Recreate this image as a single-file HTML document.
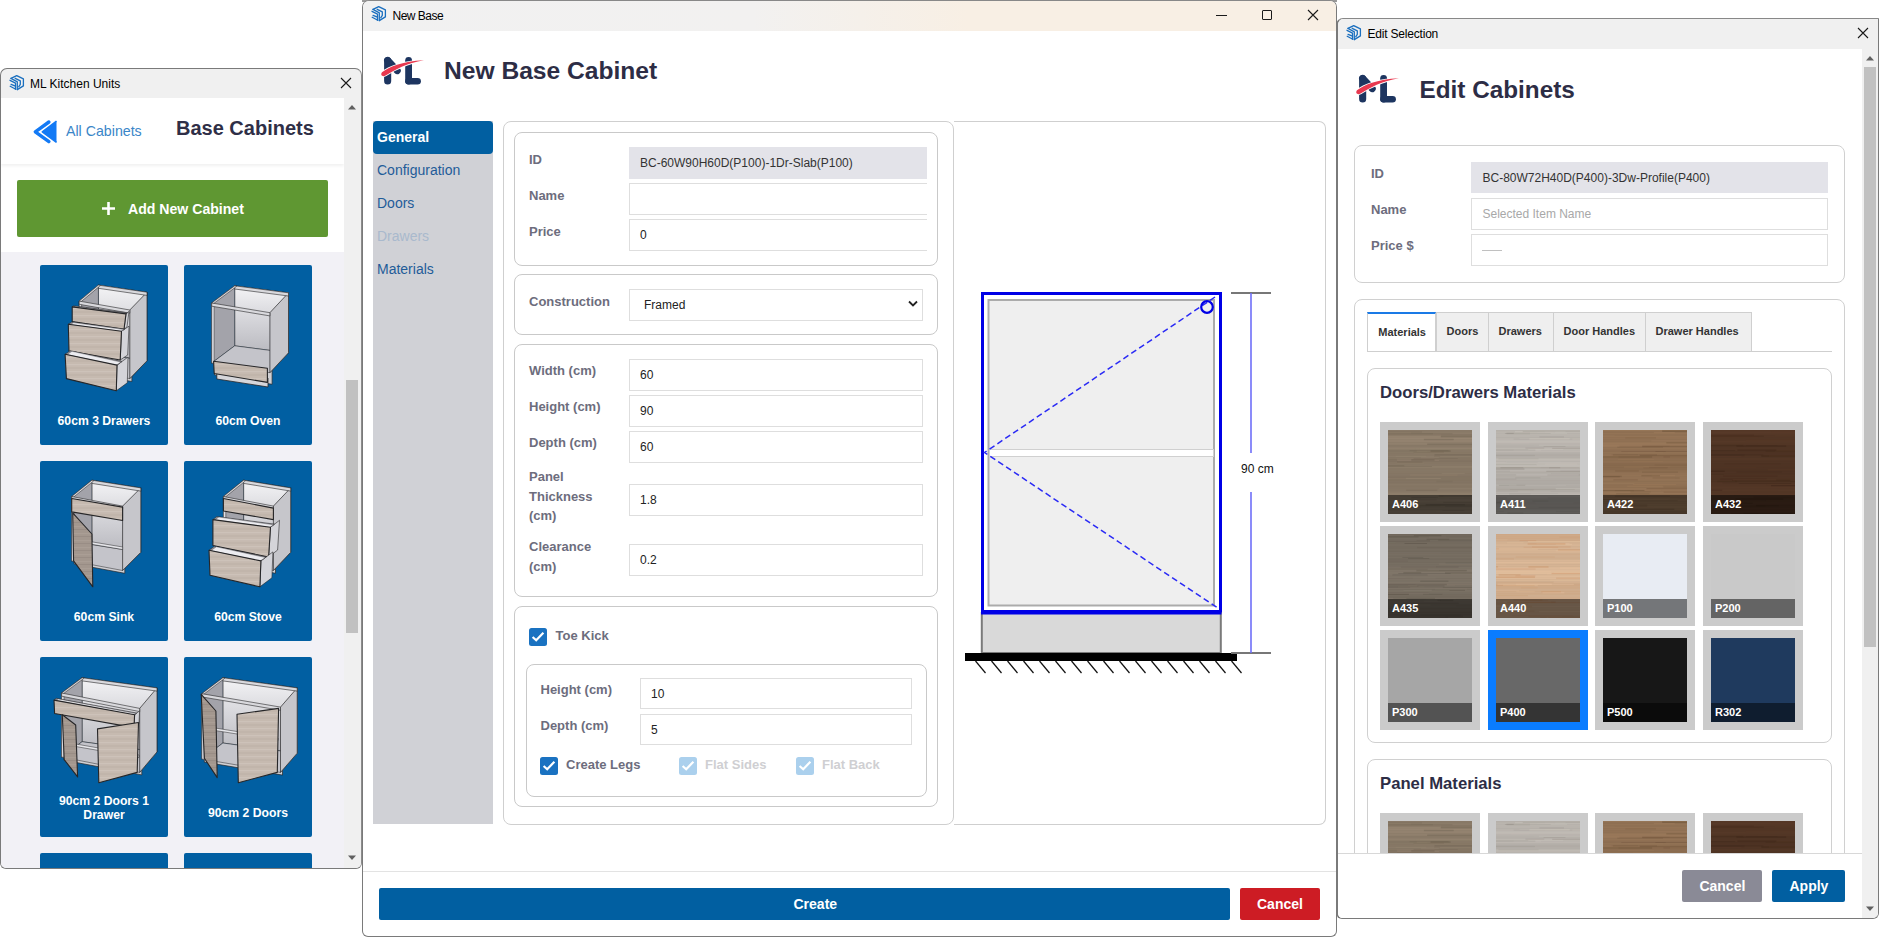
<!DOCTYPE html>
<html><head><meta charset="utf-8">
<style>
*{box-sizing:border-box;margin:0;padding:0}
html,body{width:1879px;height:937px;overflow:hidden;background:#fff;font-family:"Liberation Sans",sans-serif;position:relative}
</style></head><body>

<div style="position:absolute;left:362px;top:0px;width:975px;height:2px;background:#9a9a9a"></div>
<div style="position:absolute;left:0;top:68px;width:362px;height:801px;background:#f0f0f0;border:1px solid #7a7a7a;border-right-color:#8c8c8c;border-radius:7px 7px 6px 6px;overflow:hidden">
<svg style="position:absolute;left:7.699999999999999px;top:5.599999999999994px" width="16" height="16" viewBox="0 0 16 16">
<g fill="none" stroke="#1a6fbf" stroke-width="1.3" stroke-linejoin="round" stroke-linecap="round">
<path d="M2 3.4 L7.7 0.6 L14.4 3.9 L14.4 10.9 L8.3 14.6"/>
<path d="M2 3.4 L8.3 6.9 L8.3 14.6"/>
<path d="M6.2 3.3 L11.3 5.8 L11.3 9.3 L9.7 11.8"/>
<path d="M1 5.3 L6.5 8.1 L6.5 14.3"/>
<path d="M2.1 9.3 L5.8 10.9"/>
<path d="M1.2 11.2 L6.3 14"/>
</g></svg>
<div style="position:absolute;left:29px;top:8.84px;font-size:12px;line-height:12px;color:#000;font-weight:normal;white-space:nowrap;">ML Kitchen Units</div>
<svg style="position:absolute;left:339.0px;top:8.0px" width="12" height="12" viewBox="-6.0 -6.0 12 12"><path d="M-5.0 -5.0 L5.0 5.0 M5.0 -5.0 L-5.0 5.0" stroke="#1a1a1a" stroke-width="1.1"/></svg>
<div style="position:absolute;left:0px;top:29px;width:343px;height:770px;background:#f2f1f6"></div>
<div style="position:absolute;left:0px;top:29px;width:343px;height:154px;background:#fff"></div>
<div style="position:absolute;left:0px;top:29px;width:343px;height:66px;background:#fff;box-shadow:0 2px 3px rgba(0,0,0,0.06)"></div>
<svg style="position:absolute;left:27px;top:43px" width="36" height="36" viewBox="0 0 36 36">
<path d="M20.9 10 L7.3 19.8 L20.9 29.6" fill="none" stroke="#137af5" stroke-width="3.4" stroke-linecap="round" stroke-linejoin="round"/>
<path d="M28.5 9.2 L14.3 19.8 L28.5 30.4" fill="#137af5" stroke="#137af5" stroke-width="1.6" stroke-linejoin="round"/>
</svg>
<div style="position:absolute;left:65px;top:54.98px;font-size:14.2px;line-height:14.2px;color:#3a86c8;font-weight:normal;white-space:nowrap;">All Cabinets</div>
<div style="position:absolute;left:175px;top:48.57px;font-size:20px;line-height:20px;color:#2f2f47;font-weight:bold;white-space:nowrap;">Base Cabinets</div>
<div style="position:absolute;left:16px;top:111px;width:311px;height:57px;background:#5f9732;border-radius:2px"></div>
<svg style="position:absolute;left:100px;top:132px" width="15" height="15" viewBox="0 0 15 15"><path d="M7.5 1 V14 M1 7.5 H14" stroke="#fff" stroke-width="2.6"/></svg>
<div style="position:absolute;left:127px;top:132.56px;font-size:14.1px;line-height:14.1px;color:#fff;font-weight:bold;white-space:nowrap;">Add New Cabinet</div>
<div style="position:absolute;left:343px;top:29px;width:17px;height:770px;background:#f0f0f0"></div>
<div style="position:absolute;left:345px;top:311px;width:12px;height:253px;background:#c1c1c1"></div>
<svg style="position:absolute;left:346px;top:35px" width="10" height="6" viewBox="0 0 10 6"><path d="M1 5.5 L5 1 L9 5.5 Z" fill="#606060"/></svg>
<svg style="position:absolute;left:346px;top:786px" width="10" height="6" viewBox="0 0 10 6"><path d="M1 0.5 L5 5 L9 0.5 Z" fill="#606060"/></svg>
<div style="position:absolute;left:39px;top:196px;width:128px;height:180px;background:#015fa2;border-radius:2px"></div>
<svg style="position:absolute;left:39px;top:196px" width="128" height="180" viewBox="0 0 128 180"><defs>
<linearGradient id="gback" x1="0" y1="0" x2="0" y2="1"><stop offset="0" stop-color="#f4f4f6"/><stop offset="0.35" stop-color="#dedee2"/><stop offset="1" stop-color="#b9b9bf"/></linearGradient>
<pattern id="gwood" width="128" height="7" patternUnits="userSpaceOnUse"><rect width="128" height="7" fill="#c6bab0"/><rect y="1" width="128" height="1.2" fill="#cdc2b9"/><rect y="4.5" width="128" height="1" fill="#bdb0a6"/></pattern>
<pattern id="gwoodd" width="128" height="7" patternUnits="userSpaceOnUse"><rect width="128" height="7" fill="#a3978e"/><rect y="2" width="128" height="1.2" fill="#aa9e95"/><rect y="5" width="128" height="1" fill="#998d85"/></pattern>
</defs><polygon points="41.5,102.8 91.9,111.5 91.9,116.5 41.5,107.8" fill="#d0d0d4" stroke="#262628" stroke-width="0.7" stroke-linejoin="round" /><polygon points="58.4,20.1 107.0,27.2 107.0,95.8 58.4,88.7" fill="url(#gback)" stroke="#262628" stroke-width="0.5" stroke-linejoin="round" /><polygon points="39.2,36.1 58.4,20.1 58.4,88.7 39.2,104.7" fill="#a3a3aa" stroke="#262628" stroke-width="0.5" stroke-linejoin="round" /><polygon points="39.2,104.7 89.8,113.6 107.0,95.8 58.4,88.7" fill="#c4c4ca" stroke="#262628" stroke-width="0.5" stroke-linejoin="round" /><polygon points="89.8,45.0 107.0,27.2 107.0,95.8 89.8,113.6" fill="#c6c6cb" stroke="#262628" stroke-width="0.7" stroke-linejoin="round" /><polygon points="39.2,36.1 41.6,36.5 41.6,105.1 39.2,104.7" fill="#e2e2e6" stroke="#262628" stroke-width="0.5" stroke-linejoin="round" /><polygon points="58.4,20.1 107.0,27.2 107.0,30.4 58.4,23.3" fill="#d9d9dd" stroke="#262628" stroke-width="0.6" stroke-linejoin="round" /><polygon points="39.2,36.1 58.4,20.1 60.4,20.6 41.2,36.6" fill="#d9d9dd" stroke="#262628" stroke-width="0.5" stroke-linejoin="round" /><polygon points="39.2,36.1 89.8,45.0 89.8,48.2 39.2,39.3" fill="#d9d9dd" stroke="#262628" stroke-width="0.6" stroke-linejoin="round" /><polygon points="86.0,48.9 89.0,46.4 87.0,61.8 84.0,64.3" fill="#d4d4d9" stroke="#262628" stroke-width="0.6" stroke-linejoin="round" /><polygon points="32.2,41.9 86.0,48.9 87.3,47.8 33.6,40.8" fill="#8e8e96" stroke="#262628" stroke-width="0.5" stroke-linejoin="round" /><polygon points="34.2,42.2 85.0,49.1 86.3,48.4 35.6,41.4" fill="#ececf0" stroke="#262628" stroke-width="0.3" stroke-linejoin="round" /><polygon points="32.2,41.9 86.0,48.9 84.0,64.3 32.2,56.6" fill="url(#gwood)" stroke="#262628" stroke-width="1.1" stroke-linejoin="round" /><polygon points="81.5,66.2 89.0,61.2 87.7,90.0 80.2,95.0" fill="#d4d4d9" stroke="#262628" stroke-width="0.6" stroke-linejoin="round" /><polygon points="28.3,59.2 81.5,66.2 84.9,64.0 31.7,57.0" fill="#8e8e96" stroke="#262628" stroke-width="0.5" stroke-linejoin="round" /><polygon points="30.3,59.5 80.5,66.4 83.9,64.5 33.7,57.6" fill="#ececf0" stroke="#262628" stroke-width="0.3" stroke-linejoin="round" /><polygon points="28.3,59.2 81.5,66.2 80.2,95.0 29.0,86.0" fill="url(#gwood)" stroke="#262628" stroke-width="1.1" stroke-linejoin="round" /><polygon points="77.0,100.1 88.0,92.1 87.3,117.8 76.3,125.8" fill="#d4d4d9" stroke="#262628" stroke-width="0.6" stroke-linejoin="round" /><polygon points="25.1,89.3 77.0,100.1 82.0,96.5 30.1,85.7" fill="#8e8e96" stroke="#262628" stroke-width="0.5" stroke-linejoin="round" /><polygon points="27.1,89.6 76.0,100.3 81.0,97.1 32.0,86.3" fill="#ececf0" stroke="#262628" stroke-width="0.3" stroke-linejoin="round" /><polygon points="25.1,89.3 77.0,100.1 76.3,125.8 26.4,113.6" fill="url(#gwood)" stroke="#262628" stroke-width="1.1" stroke-linejoin="round" /></svg>
<div style="position:absolute;left:39px;top:344.5px;width:128px;text-align:center;font-size:12.2px;line-height:14.5px;color:#fff;font-weight:bold">60cm 3 Drawers</div>
<div style="position:absolute;left:183px;top:196px;width:128px;height:180px;background:#015fa2;border-radius:2px"></div>
<svg style="position:absolute;left:183px;top:196px" width="128" height="180" viewBox="0 0 128 180"><defs>
<linearGradient id="gback" x1="0" y1="0" x2="0" y2="1"><stop offset="0" stop-color="#f4f4f6"/><stop offset="0.35" stop-color="#dedee2"/><stop offset="1" stop-color="#b9b9bf"/></linearGradient>
<pattern id="gwood" width="128" height="7" patternUnits="userSpaceOnUse"><rect width="128" height="7" fill="#c6bab0"/><rect y="1" width="128" height="1.2" fill="#cdc2b9"/><rect y="4.5" width="128" height="1" fill="#bdb0a6"/></pattern>
<pattern id="gwoodd" width="128" height="7" patternUnits="userSpaceOnUse"><rect width="128" height="7" fill="#a3978e"/><rect y="2" width="128" height="1.2" fill="#aa9e95"/><rect y="5" width="128" height="1" fill="#998d85"/></pattern>
</defs><polygon points="30.5,95.9 88.1,105.3 88.1,119.3 30.5,109.9" fill="#d0d0d4" stroke="#262628" stroke-width="0.7" stroke-linejoin="round" /><polygon points="50.7,20.8 104.5,27.8 104.5,87.8 50.7,80.8" fill="url(#gback)" stroke="#262628" stroke-width="0.5" stroke-linejoin="round" /><polygon points="27.7,38.0 50.7,20.8 50.7,80.8 27.7,98.0" fill="#a3a3aa" stroke="#262628" stroke-width="0.5" stroke-linejoin="round" /><polygon points="27.7,98.0 85.9,107.7 104.5,87.8 50.7,80.8" fill="#c4c4ca" stroke="#262628" stroke-width="0.5" stroke-linejoin="round" /><polygon points="85.9,47.7 104.5,27.8 104.5,87.8 85.9,107.7" fill="#c6c6cb" stroke="#262628" stroke-width="0.7" stroke-linejoin="round" /><polygon points="27.7,38.0 30.1,38.4 30.1,98.4 27.7,98.0" fill="#e2e2e6" stroke="#262628" stroke-width="0.5" stroke-linejoin="round" /><polygon points="50.7,20.8 104.5,27.8 104.5,31.0 50.7,24.0" fill="#d9d9dd" stroke="#262628" stroke-width="0.6" stroke-linejoin="round" /><polygon points="27.7,38.0 50.7,20.8 52.7,21.3 29.7,38.5" fill="#d9d9dd" stroke="#262628" stroke-width="0.5" stroke-linejoin="round" /><polygon points="27.7,38.0 85.9,47.7 85.9,50.9 27.7,41.2" fill="#d9d9dd" stroke="#262628" stroke-width="0.6" stroke-linejoin="round" /><polygon points="32.8,106.0 84.0,113.0 84.0,122.0 32.8,114.0" fill="#d6d6da" stroke="#262628" stroke-width="0.8" stroke-linejoin="round" /><polygon points="29.6,96.3 83.4,103.3 83.4,117.4 30.2,108.5" fill="url(#gwood)" stroke="#262628" stroke-width="1.1" stroke-linejoin="round" /></svg>
<div style="position:absolute;left:183px;top:344.5px;width:128px;text-align:center;font-size:12.2px;line-height:14.5px;color:#fff;font-weight:bold">60cm Oven</div>
<div style="position:absolute;left:39px;top:392px;width:128px;height:180px;background:#015fa2;border-radius:2px"></div>
<svg style="position:absolute;left:39px;top:392px" width="128" height="180" viewBox="0 0 128 180"><defs>
<linearGradient id="gback" x1="0" y1="0" x2="0" y2="1"><stop offset="0" stop-color="#f4f4f6"/><stop offset="0.35" stop-color="#dedee2"/><stop offset="1" stop-color="#b9b9bf"/></linearGradient>
<pattern id="gwood" width="128" height="7" patternUnits="userSpaceOnUse"><rect width="128" height="7" fill="#c6bab0"/><rect y="1" width="128" height="1.2" fill="#cdc2b9"/><rect y="4.5" width="128" height="1" fill="#bdb0a6"/></pattern>
<pattern id="gwoodd" width="128" height="7" patternUnits="userSpaceOnUse"><rect width="128" height="7" fill="#a3978e"/><rect y="2" width="128" height="1.2" fill="#aa9e95"/><rect y="5" width="128" height="1" fill="#998d85"/></pattern>
</defs><polygon points="34.1,97.9 84.8,107.3 84.8,112.3 34.1,102.9" fill="#d0d0d4" stroke="#262628" stroke-width="0.7" stroke-linejoin="round" /><polygon points="51.9,19.2 100.8,26.9 100.8,91.3 51.9,83.6" fill="url(#gback)" stroke="#262628" stroke-width="0.5" stroke-linejoin="round" /><polygon points="31.7,35.5 51.9,19.2 51.9,83.6 31.7,99.9" fill="#a3a3aa" stroke="#262628" stroke-width="0.5" stroke-linejoin="round" /><polygon points="31.7,99.9 82.6,109.5 100.8,91.3 51.9,83.6" fill="#c4c4ca" stroke="#262628" stroke-width="0.5" stroke-linejoin="round" /><polygon points="82.6,45.1 100.8,26.9 100.8,91.3 82.6,109.5" fill="#c6c6cb" stroke="#262628" stroke-width="0.7" stroke-linejoin="round" /><polygon points="31.7,35.5 34.1,35.9 34.1,100.3 31.7,99.9" fill="#e2e2e6" stroke="#262628" stroke-width="0.5" stroke-linejoin="round" /><polygon points="51.9,19.2 100.8,26.9 100.8,30.1 51.9,22.4" fill="#d9d9dd" stroke="#262628" stroke-width="0.6" stroke-linejoin="round" /><polygon points="31.7,35.5 51.9,19.2 53.9,19.7 33.7,36.0" fill="#d9d9dd" stroke="#262628" stroke-width="0.5" stroke-linejoin="round" /><polygon points="31.7,35.5 82.6,45.1 82.6,48.3 31.7,38.7" fill="#d9d9dd" stroke="#262628" stroke-width="0.6" stroke-linejoin="round" /><polygon points="38.0,78.5 82.6,86.0 82.6,88.5 38.0,81.0" fill="#e6e6ea" stroke="#262628" stroke-width="0.5" stroke-linejoin="round" /><polygon points="31.7,37.5 82.6,46.1 82.6,59.5 31.7,50.9" fill="url(#gwood)" stroke="#262628" stroke-width="1.1" stroke-linejoin="round" /><polygon points="32.7,51.9 51.9,73.0 52.8,125.8 33.6,99.9" fill="url(#gwoodd)" stroke="#262628" stroke-width="1.1" stroke-linejoin="round" /></svg>
<div style="position:absolute;left:39px;top:540.5px;width:128px;text-align:center;font-size:12.2px;line-height:14.5px;color:#fff;font-weight:bold">60cm Sink</div>
<div style="position:absolute;left:183px;top:392px;width:128px;height:180px;background:#015fa2;border-radius:2px"></div>
<svg style="position:absolute;left:183px;top:392px" width="128" height="180" viewBox="0 0 128 180"><defs>
<linearGradient id="gback" x1="0" y1="0" x2="0" y2="1"><stop offset="0" stop-color="#f4f4f6"/><stop offset="0.35" stop-color="#dedee2"/><stop offset="1" stop-color="#b9b9bf"/></linearGradient>
<pattern id="gwood" width="128" height="7" patternUnits="userSpaceOnUse"><rect width="128" height="7" fill="#c6bab0"/><rect y="1" width="128" height="1.2" fill="#cdc2b9"/><rect y="4.5" width="128" height="1" fill="#bdb0a6"/></pattern>
<pattern id="gwoodd" width="128" height="7" patternUnits="userSpaceOnUse"><rect width="128" height="7" fill="#a3978e"/><rect y="2" width="128" height="1.2" fill="#aa9e95"/><rect y="5" width="128" height="1" fill="#998d85"/></pattern>
</defs><polygon points="41.8,97.9 91.5,107.3 91.5,112.3 41.8,102.9" fill="#d0d0d4" stroke="#262628" stroke-width="0.7" stroke-linejoin="round" /><polygon points="59.6,19.2 106.7,26.9 106.7,91.3 59.6,83.6" fill="url(#gback)" stroke="#262628" stroke-width="0.5" stroke-linejoin="round" /><polygon points="39.4,35.5 59.6,19.2 59.6,83.6 39.4,99.9" fill="#a3a3aa" stroke="#262628" stroke-width="0.5" stroke-linejoin="round" /><polygon points="39.4,99.9 89.4,109.5 106.7,91.3 59.6,83.6" fill="#c4c4ca" stroke="#262628" stroke-width="0.5" stroke-linejoin="round" /><polygon points="89.4,45.1 106.7,26.9 106.7,91.3 89.4,109.5" fill="#c6c6cb" stroke="#262628" stroke-width="0.7" stroke-linejoin="round" /><polygon points="39.4,35.5 41.8,35.9 41.8,100.3 39.4,99.9" fill="#e2e2e6" stroke="#262628" stroke-width="0.5" stroke-linejoin="round" /><polygon points="59.6,19.2 106.7,26.9 106.7,30.1 59.6,22.4" fill="#d9d9dd" stroke="#262628" stroke-width="0.6" stroke-linejoin="round" /><polygon points="39.4,35.5 59.6,19.2 61.6,19.7 41.4,36.0" fill="#d9d9dd" stroke="#262628" stroke-width="0.5" stroke-linejoin="round" /><polygon points="39.4,35.5 89.4,45.1 89.4,48.3 39.4,38.7" fill="#d9d9dd" stroke="#262628" stroke-width="0.6" stroke-linejoin="round" /><polygon points="39.4,37.5 89.4,47.1 89.4,58.6 39.4,50.0" fill="url(#gwood)" stroke="#262628" stroke-width="1.1" stroke-linejoin="round" /><polygon points="86.5,66.3 95.5,59.3 93.6,89.0 84.6,96.0" fill="#d4d4d9" stroke="#262628" stroke-width="0.6" stroke-linejoin="round" /><polygon points="28.9,58.6 86.5,66.3 90.5,63.1 32.9,55.5" fill="#8e8e96" stroke="#262628" stroke-width="0.5" stroke-linejoin="round" /><polygon points="30.9,58.9 85.5,66.5 89.5,63.8 34.9,56.1" fill="#ececf0" stroke="#262628" stroke-width="0.3" stroke-linejoin="round" /><polygon points="28.9,58.6 86.5,66.3 84.6,96.0 28.9,84.5" fill="url(#gwood)" stroke="#262628" stroke-width="1.1" stroke-linejoin="round" /><polygon points="76.9,99.9 88.9,90.9 87.9,116.8 75.9,125.8" fill="#d4d4d9" stroke="#262628" stroke-width="0.6" stroke-linejoin="round" /><polygon points="25.0,89.3 76.9,99.9 82.3,95.9 30.4,85.2" fill="#8e8e96" stroke="#262628" stroke-width="0.5" stroke-linejoin="round" /><polygon points="27.0,89.6 75.9,100.1 81.3,96.5 32.4,85.8" fill="#ececf0" stroke="#262628" stroke-width="0.3" stroke-linejoin="round" /><polygon points="25.0,89.3 76.9,99.9 75.9,125.8 26.0,114.3" fill="url(#gwood)" stroke="#262628" stroke-width="1.1" stroke-linejoin="round" /></svg>
<div style="position:absolute;left:183px;top:540.5px;width:128px;text-align:center;font-size:12.2px;line-height:14.5px;color:#fff;font-weight:bold">60cm Stove</div>
<div style="position:absolute;left:39px;top:588px;width:128px;height:180px;background:#015fa2;border-radius:2px"></div>
<svg style="position:absolute;left:39px;top:588px" width="128" height="180" viewBox="0 0 128 180"><defs>
<linearGradient id="gback" x1="0" y1="0" x2="0" y2="1"><stop offset="0" stop-color="#f4f4f6"/><stop offset="0.35" stop-color="#dedee2"/><stop offset="1" stop-color="#b9b9bf"/></linearGradient>
<pattern id="gwood" width="128" height="7" patternUnits="userSpaceOnUse"><rect width="128" height="7" fill="#c6bab0"/><rect y="1" width="128" height="1.2" fill="#cdc2b9"/><rect y="4.5" width="128" height="1" fill="#bdb0a6"/></pattern>
<pattern id="gwoodd" width="128" height="7" patternUnits="userSpaceOnUse"><rect width="128" height="7" fill="#a3978e"/><rect y="2" width="128" height="1.2" fill="#aa9e95"/><rect y="5" width="128" height="1" fill="#998d85"/></pattern>
</defs><polygon points="24.1,98.2 101.8,112.9 101.8,117.9 24.1,103.2" fill="#d0d0d4" stroke="#262628" stroke-width="0.7" stroke-linejoin="round" /><polygon points="42.1,20.7 117.0,30.9 117.0,94.9 42.1,84.7" fill="url(#gback)" stroke="#262628" stroke-width="0.5" stroke-linejoin="round" /><polygon points="21.6,36.0 42.1,20.7 42.1,84.7 21.6,100.0" fill="#a3a3aa" stroke="#262628" stroke-width="0.5" stroke-linejoin="round" /><polygon points="21.6,100.0 99.7,115.4 117.0,94.9 42.1,84.7" fill="#c4c4ca" stroke="#262628" stroke-width="0.5" stroke-linejoin="round" /><polygon points="99.7,51.4 117.0,30.9 117.0,94.9 99.7,115.4" fill="#c6c6cb" stroke="#262628" stroke-width="0.7" stroke-linejoin="round" /><polygon points="21.6,36.0 24.0,36.4 24.0,100.4 21.6,100.0" fill="#e2e2e6" stroke="#262628" stroke-width="0.5" stroke-linejoin="round" /><polygon points="42.1,20.7 117.0,30.9 117.0,34.1 42.1,23.9" fill="#d9d9dd" stroke="#262628" stroke-width="0.6" stroke-linejoin="round" /><polygon points="21.6,36.0 42.1,20.7 44.1,21.2 23.6,36.5" fill="#d9d9dd" stroke="#262628" stroke-width="0.5" stroke-linejoin="round" /><polygon points="21.6,36.0 99.7,51.4 99.7,54.6 21.6,39.2" fill="#d9d9dd" stroke="#262628" stroke-width="0.6" stroke-linejoin="round" /><polygon points="30.0,86.0 99.0,98.0 99.0,100.5 30.0,88.5" fill="#e6e6ea" stroke="#262628" stroke-width="0.5" stroke-linejoin="round" /><polygon points="94.6,57.8 99.6,53.8 99.0,66.6 94.0,70.6" fill="#d4d4d9" stroke="#262628" stroke-width="0.6" stroke-linejoin="round" /><polygon points="14.0,43.1 94.6,57.8 96.8,56.0 16.2,41.3" fill="#8e8e96" stroke="#262628" stroke-width="0.5" stroke-linejoin="round" /><polygon points="16.0,43.4 93.6,58.0 95.8,56.6 18.2,41.9" fill="#ececf0" stroke="#262628" stroke-width="0.3" stroke-linejoin="round" /><polygon points="14.0,43.1 94.6,57.8 94.0,70.6 14.6,56.5" fill="url(#gwood)" stroke="#262628" stroke-width="1.1" stroke-linejoin="round" /><polygon points="22.3,57.8 35.7,68.0 37.6,119.9 24.2,102.6" fill="url(#gwoodd)" stroke="#262628" stroke-width="1.1" stroke-linejoin="round" /><polygon points="57.5,71.9 98.5,65.5 97.2,115.4 58.8,125.7" fill="url(#gwood)" stroke="#262628" stroke-width="1.1" stroke-linejoin="round" /></svg>
<div style="position:absolute;left:39px;top:724.5px;width:128px;text-align:center;font-size:12.2px;line-height:14.5px;color:#fff;font-weight:bold">90cm 2 Doors 1<br>Drawer</div>
<div style="position:absolute;left:183px;top:588px;width:128px;height:180px;background:#015fa2;border-radius:2px"></div>
<svg style="position:absolute;left:183px;top:588px" width="128" height="180" viewBox="0 0 128 180"><defs>
<linearGradient id="gback" x1="0" y1="0" x2="0" y2="1"><stop offset="0" stop-color="#f4f4f6"/><stop offset="0.35" stop-color="#dedee2"/><stop offset="1" stop-color="#b9b9bf"/></linearGradient>
<pattern id="gwood" width="128" height="7" patternUnits="userSpaceOnUse"><rect width="128" height="7" fill="#c6bab0"/><rect y="1" width="128" height="1.2" fill="#cdc2b9"/><rect y="4.5" width="128" height="1" fill="#bdb0a6"/></pattern>
<pattern id="gwoodd" width="128" height="7" patternUnits="userSpaceOnUse"><rect width="128" height="7" fill="#a3978e"/><rect y="2" width="128" height="1.2" fill="#aa9e95"/><rect y="5" width="128" height="1" fill="#998d85"/></pattern>
</defs><polygon points="20.3,100.1 98.5,113.1 98.5,118.1 20.3,105.1" fill="#d0d0d4" stroke="#262628" stroke-width="0.7" stroke-linejoin="round" /><polygon points="38.9,20.7 113.2,30.9 113.2,96.2 38.9,86.0" fill="url(#gback)" stroke="#262628" stroke-width="0.5" stroke-linejoin="round" /><polygon points="17.8,36.7 38.9,20.7 38.9,86.0 17.8,102.0" fill="#a3a3aa" stroke="#262628" stroke-width="0.5" stroke-linejoin="round" /><polygon points="17.8,102.0 96.5,115.4 113.2,96.2 38.9,86.0" fill="#c4c4ca" stroke="#262628" stroke-width="0.5" stroke-linejoin="round" /><polygon points="96.5,50.1 113.2,30.9 113.2,96.2 96.5,115.4" fill="#c6c6cb" stroke="#262628" stroke-width="0.7" stroke-linejoin="round" /><polygon points="17.8,36.7 20.2,37.1 20.2,102.4 17.8,102.0" fill="#e2e2e6" stroke="#262628" stroke-width="0.5" stroke-linejoin="round" /><polygon points="38.9,20.7 113.2,30.9 113.2,34.1 38.9,23.9" fill="#d9d9dd" stroke="#262628" stroke-width="0.6" stroke-linejoin="round" /><polygon points="17.8,36.7 38.9,20.7 40.9,21.2 19.8,37.2" fill="#d9d9dd" stroke="#262628" stroke-width="0.5" stroke-linejoin="round" /><polygon points="17.8,36.7 96.5,50.1 96.5,53.3 17.8,39.9" fill="#d9d9dd" stroke="#262628" stroke-width="0.6" stroke-linejoin="round" /><polygon points="31.0,71.0 94.0,81.0 94.0,83.5 31.0,73.5" fill="#e6e6ea" stroke="#262628" stroke-width="0.5" stroke-linejoin="round" /><polygon points="17.2,37.3 31.9,54.0 33.2,120.6 20.4,101.3" fill="url(#gwoodd)" stroke="#262628" stroke-width="1.1" stroke-linejoin="round" /><polygon points="53.0,57.2 94.6,51.4 93.3,115.4 54.3,125.7" fill="url(#gwood)" stroke="#262628" stroke-width="1.1" stroke-linejoin="round" /></svg>
<div style="position:absolute;left:183px;top:736.5px;width:128px;text-align:center;font-size:12.2px;line-height:14.5px;color:#fff;font-weight:bold">90cm 2 Doors</div>
<div style="position:absolute;left:39px;top:784px;width:128px;height:180px;background:#015fa2;border-radius:2px"></div>
<div style="position:absolute;left:183px;top:784px;width:128px;height:180px;background:#015fa2;border-radius:2px"></div>
</div>
<div style="position:absolute;left:362px;top:0;width:975px;height:937px;background:#fff;border:1px solid #7a7a7a;border-top-color:#888;border-radius:7px 7px 6px 6px;overflow:hidden">
<div style="position:absolute;left:0px;top:0px;width:975px;height:30px;background:linear-gradient(90deg,#f1f1f1 0%,#f2f1f0 40%,#f8efe4 62%,#f8efe4 100%)"></div>
<svg style="position:absolute;left:8px;top:5px" width="16" height="16" viewBox="0 0 16 16">
<g fill="none" stroke="#1a6fbf" stroke-width="1.3" stroke-linejoin="round" stroke-linecap="round">
<path d="M2 3.4 L7.7 0.6 L14.4 3.9 L14.4 10.9 L8.3 14.6"/>
<path d="M2 3.4 L8.3 6.9 L8.3 14.6"/>
<path d="M6.2 3.3 L11.3 5.8 L11.3 9.3 L9.7 11.8"/>
<path d="M1 5.3 L6.5 8.1 L6.5 14.3"/>
<path d="M2.1 9.3 L5.8 10.9"/>
<path d="M1.2 11.2 L6.3 14"/>
</g></svg>
<div style="position:absolute;left:29.5px;top:8.84px;font-size:12px;line-height:12px;color:#000;font-weight:normal;white-space:nowrap;letter-spacing:-0.5px">New Base</div>
<div style="position:absolute;left:853px;top:14px;width:11px;height:1.2px;background:#1a1a1a"></div>
<div style="position:absolute;left:899px;top:9px;width:10px;height:10px;border:1.2px solid #1a1a1a;border-radius:1px"></div>
<svg style="position:absolute;left:944.0px;top:8.0px" width="12" height="12" viewBox="-6.0 -6.0 12 12"><path d="M-5.0 -5.0 L5.0 5.0 M5.0 -5.0 L-5.0 5.0" stroke="#1a1a1a" stroke-width="1.1"/></svg>
<svg style="position:absolute;left:13px;top:51px" width="52" height="38" viewBox="0 0 52 38">
<g fill="#1d3560">
<rect x="8.1" y="4.9" width="7.1" height="27.6" rx="3.55"/>
<path d="M11.65 8.45 L21.2 18.6" stroke="#1d3560" stroke-width="7.1" stroke-linecap="round"/>
<rect x="29.2" y="4.9" width="6.8" height="27.6" rx="3.4"/>
<rect x="29.2" y="25.9" width="15.7" height="6.6" rx="3.3"/>
</g>
<path d="M6 20.3 C 12 15.2, 26 9.2, 48 8.2 C 31 11, 18.5 17.8, 9.5 23.6 C 6.5 25.3, 4 23, 6 20.3 Z" fill="#e8384f" stroke="#fff" stroke-width="1.6" paint-order="stroke"/>
</svg>
<div style="position:absolute;left:81px;top:58.18px;font-size:24.6px;line-height:24.6px;color:#2d2d45;font-weight:bold;white-space:nowrap;">New Base Cabinet</div>
<div style="position:absolute;left:10px;top:120px;width:120px;height:703px;background:#d0d1d6"></div>
<div style="position:absolute;left:10px;top:120px;width:120px;height:33px;background:#015fa1;border-radius:4px"></div>
<div style="position:absolute;left:14px;top:129.45px;font-size:14px;line-height:14px;color:#fff;font-weight:bold;white-space:nowrap;">General</div>
<div style="position:absolute;left:14px;top:162.45px;font-size:14px;line-height:14px;color:#1f5c99;font-weight:normal;white-space:nowrap;">Configuration</div>
<div style="position:absolute;left:14px;top:195.45px;font-size:14px;line-height:14px;color:#1f5c99;font-weight:normal;white-space:nowrap;">Doors</div>
<div style="position:absolute;left:14px;top:228.45px;font-size:14px;line-height:14px;color:#a9b9cd;font-weight:normal;white-space:nowrap;">Drawers</div>
<div style="position:absolute;left:14px;top:261.45px;font-size:14px;line-height:14px;color:#1f5c99;font-weight:normal;white-space:nowrap;">Materials</div>
<div style="position:absolute;left:140px;top:120px;width:451px;height:704px;border:1.2px solid #cfcfcf;border-radius:8px"></div>
<div style="position:absolute;left:591px;top:120px;width:372px;height:704px;border:1.2px solid #cfcfcf;border-left:none;border-radius:0 7px 7px 0"></div>
<div style="position:absolute;left:151px;top:131px;width:424px;height:134px;border:1.2px solid #c9c9c9;border-radius:8px"></div>
<div style="position:absolute;left:151px;top:273px;width:424px;height:61px;border:1.2px solid #c9c9c9;border-radius:8px"></div>
<div style="position:absolute;left:151px;top:343px;width:424px;height:253px;border:1.2px solid #c9c9c9;border-radius:8px"></div>
<div style="position:absolute;left:151px;top:605px;width:424px;height:201px;border:1.2px solid #c9c9c9;border-radius:8px"></div>
<div style="position:absolute;left:266px;top:146px;width:298px;height:32px;background:#e3e3e9;border:none;"></div>
<div style="position:absolute;left:277px;top:156.24px;font-size:12px;line-height:12px;color:#333;font-weight:normal;white-space:nowrap;">BC-60W90H60D(P100)-1Dr-Slab(P100)</div>
<div style="position:absolute;left:266px;top:182px;width:298px;height:32px;background:#fff;border:1px solid #dedede;border-right:none"></div>
<div style="position:absolute;left:266px;top:218px;width:298px;height:32px;background:#fff;border:1px solid #dedede;border-right:none"></div>
<div style="position:absolute;left:277px;top:228.24px;font-size:12px;line-height:12px;color:#222;font-weight:normal;white-space:nowrap;">0</div>
<div style="position:absolute;left:166px;top:152.30px;font-size:13px;line-height:13px;color:#6d6d7d;font-weight:bold;white-space:nowrap;">ID</div>
<div style="position:absolute;left:166px;top:188.30px;font-size:13px;line-height:13px;color:#6d6d7d;font-weight:bold;white-space:nowrap;">Name</div>
<div style="position:absolute;left:166px;top:224.30px;font-size:13px;line-height:13px;color:#6d6d7d;font-weight:bold;white-space:nowrap;">Price</div>
<div style="position:absolute;left:166px;top:294.00px;font-size:13px;line-height:13px;color:#6d6d7d;font-weight:bold;white-space:nowrap;">Construction</div>
<div style="position:absolute;left:266px;top:288px;width:294px;height:32px;background:#fff;border:1px solid #dedede;"></div>
<div style="position:absolute;left:281px;top:298.24px;font-size:12px;line-height:12px;color:#222;font-weight:normal;white-space:nowrap;">Framed</div>
<svg style="position:absolute;left:545px;top:299px" width="10" height="8" viewBox="0 0 10 8"><path d="M1 1.5 L5 5.5 L9 1.5" fill="none" stroke="#222" stroke-width="1.8"/></svg>
<div style="position:absolute;left:266px;top:358px;width:294px;height:32px;background:#fff;border:1px solid #dedede;"></div>
<div style="position:absolute;left:277px;top:368.24px;font-size:12px;line-height:12px;color:#222;font-weight:normal;white-space:nowrap;">60</div>
<div style="position:absolute;left:166px;top:363.30px;font-size:13px;line-height:13px;color:#6d6d7d;font-weight:bold;white-space:nowrap;">Width (cm)</div>
<div style="position:absolute;left:266px;top:394px;width:294px;height:32px;background:#fff;border:1px solid #dedede;"></div>
<div style="position:absolute;left:277px;top:404.24px;font-size:12px;line-height:12px;color:#222;font-weight:normal;white-space:nowrap;">90</div>
<div style="position:absolute;left:166px;top:399.30px;font-size:13px;line-height:13px;color:#6d6d7d;font-weight:bold;white-space:nowrap;">Height (cm)</div>
<div style="position:absolute;left:266px;top:430px;width:294px;height:32px;background:#fff;border:1px solid #dedede;"></div>
<div style="position:absolute;left:277px;top:440.24px;font-size:12px;line-height:12px;color:#222;font-weight:normal;white-space:nowrap;">60</div>
<div style="position:absolute;left:166px;top:435.30px;font-size:13px;line-height:13px;color:#6d6d7d;font-weight:bold;white-space:nowrap;">Depth (cm)</div>
<div style="position:absolute;left:266px;top:483px;width:294px;height:32px;background:#fff;border:1px solid #dedede;"></div>
<div style="position:absolute;left:277px;top:493.24px;font-size:12px;line-height:12px;color:#222;font-weight:normal;white-space:nowrap;">1.8</div>
<div style="position:absolute;left:166px;top:469.00px;font-size:13px;line-height:13px;color:#6d6d7d;font-weight:bold;white-space:nowrap;">Panel</div>
<div style="position:absolute;left:166px;top:488.50px;font-size:13px;line-height:13px;color:#6d6d7d;font-weight:bold;white-space:nowrap;">Thickness</div>
<div style="position:absolute;left:166px;top:508.00px;font-size:13px;line-height:13px;color:#6d6d7d;font-weight:bold;white-space:nowrap;">(cm)</div>
<div style="position:absolute;left:266px;top:543px;width:294px;height:32px;background:#fff;border:1px solid #dedede;"></div>
<div style="position:absolute;left:277px;top:553.24px;font-size:12px;line-height:12px;color:#222;font-weight:normal;white-space:nowrap;">0.2</div>
<div style="position:absolute;left:166px;top:539.00px;font-size:13px;line-height:13px;color:#6d6d7d;font-weight:bold;white-space:nowrap;">Clearance</div>
<div style="position:absolute;left:166px;top:558.50px;font-size:13px;line-height:13px;color:#6d6d7d;font-weight:bold;white-space:nowrap;">(cm)</div>
<svg style="position:absolute;left:166px;top:627px" width="18" height="18" viewBox="0 0 18 18"><rect x="0" y="0" width="18" height="18" rx="2.5" fill="#1a72c1"/><path d="M3.6 9 L7.2 12.3 L14.4 4.7" fill="none" stroke="#fff" stroke-width="2.2"/></svg>
<div style="position:absolute;left:192.5px;top:628.00px;font-size:13px;line-height:13px;color:#6d6d7d;font-weight:bold;white-space:nowrap;">Toe Kick</div>
<div style="position:absolute;left:163px;top:663px;width:401px;height:133px;border:1.2px solid #c9c9c9;border-radius:8px"></div>
<div style="position:absolute;left:277px;top:677px;width:272px;height:31px;background:#fff;border:1px solid #dedede;"></div>
<div style="position:absolute;left:288px;top:686.74px;font-size:12px;line-height:12px;color:#222;font-weight:normal;white-space:nowrap;">10</div>
<div style="position:absolute;left:177.5px;top:682.00px;font-size:13px;line-height:13px;color:#6d6d7d;font-weight:bold;white-space:nowrap;">Height (cm)</div>
<div style="position:absolute;left:277px;top:713px;width:272px;height:31px;background:#fff;border:1px solid #dedede;"></div>
<div style="position:absolute;left:288px;top:722.74px;font-size:12px;line-height:12px;color:#222;font-weight:normal;white-space:nowrap;">5</div>
<div style="position:absolute;left:177.5px;top:718.00px;font-size:13px;line-height:13px;color:#6d6d7d;font-weight:bold;white-space:nowrap;">Depth (cm)</div>
<svg style="position:absolute;left:177px;top:756px" width="18" height="18" viewBox="0 0 18 18"><rect x="0" y="0" width="18" height="18" rx="2.5" fill="#1a72c1"/><path d="M3.6 9 L7.2 12.3 L14.4 4.7" fill="none" stroke="#fff" stroke-width="2.2"/></svg>
<div style="position:absolute;left:203px;top:757.30px;font-size:13px;line-height:13px;color:#6d6d7d;font-weight:bold;white-space:nowrap;">Create Legs</div>
<svg style="position:absolute;left:316px;top:756px" width="18" height="18" viewBox="0 0 18 18"><rect x="0" y="0" width="18" height="18" rx="2.5" fill="#abd0ed"/><path d="M3.6 9 L7.2 12.3 L14.4 4.7" fill="none" stroke="#fff" stroke-width="2.2"/></svg>
<div style="position:absolute;left:342px;top:757.20px;font-size:13px;line-height:13px;color:#cfcfd2;font-weight:bold;white-space:nowrap;">Flat Sides</div>
<svg style="position:absolute;left:433px;top:756px" width="18" height="18" viewBox="0 0 18 18"><rect x="0" y="0" width="18" height="18" rx="2.5" fill="#abd0ed"/><path d="M3.6 9 L7.2 12.3 L14.4 4.7" fill="none" stroke="#fff" stroke-width="2.2"/></svg>
<div style="position:absolute;left:459px;top:757.20px;font-size:13px;line-height:13px;color:#cfcfd2;font-weight:bold;white-space:nowrap;">Flat Back</div>
<svg style="position:absolute;left:592px;top:121px" width="370" height="700" viewBox="955 122 370 700">
<rect x="982.5" y="293.5" width="238" height="318" fill="#fff" stroke="#0000e6" stroke-width="3"/>
<rect x="988.5" y="300" width="225.5" height="305.5" fill="#efefef" stroke="#ababab" stroke-width="2"/>
<rect x="989.5" y="449.5" width="224" height="7" fill="#fff" stroke="#d0d0d0" stroke-width="1"/>
<polyline points="1215,297 984.5,452.5 1217,607.5" fill="none" stroke="#2a2af5" stroke-width="1.5" stroke-dasharray="6,3.5"/>
<circle cx="1207" cy="307" r="5.8" fill="none" stroke="#0000e6" stroke-width="2.2"/>
<rect x="981.8" y="613" width="239" height="40" fill="#d9d9d9" stroke="#7a7a7a" stroke-width="2" />
<rect x="981" y="611.5" width="240.5" height="3" fill="#0000e6"/>
<rect x="965" y="653" width="272" height="8" fill="#000"/>
<line x1="975.5" y1="661" x2="985.5" y2="673" stroke="#111" stroke-width="1.2"/>
<line x1="991.5" y1="661" x2="1001.5" y2="673" stroke="#111" stroke-width="1.2"/>
<line x1="1007.5" y1="661" x2="1017.5" y2="673" stroke="#111" stroke-width="1.2"/>
<line x1="1023.5" y1="661" x2="1033.5" y2="673" stroke="#111" stroke-width="1.2"/>
<line x1="1039.5" y1="661" x2="1049.5" y2="673" stroke="#111" stroke-width="1.2"/>
<line x1="1055.5" y1="661" x2="1065.5" y2="673" stroke="#111" stroke-width="1.2"/>
<line x1="1071.5" y1="661" x2="1081.5" y2="673" stroke="#111" stroke-width="1.2"/>
<line x1="1087.5" y1="661" x2="1097.5" y2="673" stroke="#111" stroke-width="1.2"/>
<line x1="1103.5" y1="661" x2="1113.5" y2="673" stroke="#111" stroke-width="1.2"/>
<line x1="1119.5" y1="661" x2="1129.5" y2="673" stroke="#111" stroke-width="1.2"/>
<line x1="1135.5" y1="661" x2="1145.5" y2="673" stroke="#111" stroke-width="1.2"/>
<line x1="1151.5" y1="661" x2="1161.5" y2="673" stroke="#111" stroke-width="1.2"/>
<line x1="1167.5" y1="661" x2="1177.5" y2="673" stroke="#111" stroke-width="1.2"/>
<line x1="1183.5" y1="661" x2="1193.5" y2="673" stroke="#111" stroke-width="1.2"/>
<line x1="1199.5" y1="661" x2="1209.5" y2="673" stroke="#111" stroke-width="1.2"/>
<line x1="1215.5" y1="661" x2="1225.5" y2="673" stroke="#111" stroke-width="1.2"/>
<line x1="1231.5" y1="661" x2="1241.5" y2="673" stroke="#111" stroke-width="1.2"/>
<line x1="1231" y1="293" x2="1271" y2="293" stroke="#777" stroke-width="2"/>
<line x1="1231" y1="653" x2="1271" y2="653" stroke="#777" stroke-width="2"/>
<line x1="1251" y1="293" x2="1251" y2="453" stroke="#6f6ff8" stroke-width="1.6"/>
<line x1="1251" y1="492" x2="1251" y2="653" stroke="#6f6ff8" stroke-width="1.6"/>
</svg><div style="position:absolute;left:878px;top:461.84px;font-size:12px;line-height:12px;color:#111;font-weight:normal;white-space:nowrap;">90 cm</div>
<div style="position:absolute;left:0px;top:870px;width:975px;height:1px;background:#e3e3e3"></div>
<div style="position:absolute;left:16px;top:887px;width:851px;height:32px;background:#015fa1;border-radius:2px"></div>
<div style="position:absolute;left:430.5px;top:896.15px;font-size:14px;line-height:14px;color:#fff;font-weight:bold;white-space:nowrap;">Create</div>
<div style="position:absolute;left:877px;top:887px;width:80px;height:32px;background:#cd1c24;border-radius:2px"></div>
<div style="position:absolute;left:894px;top:896.15px;font-size:14px;line-height:14px;color:#fff;font-weight:bold;white-space:nowrap;">Cancel</div>
</div>
<div style="position:absolute;left:1336px;top:18px;width:543px;height:901px;background:#fff;border:1px solid #7a7a7a;border-left-width:2px;border-top-color:#888;border-radius:7px 0 6px 6px;overflow:hidden">
<div style="position:absolute;left:0px;top:0px;width:543px;height:30px;background:#f0f0f0"></div>
<svg style="position:absolute;left:8px;top:6px" width="16" height="16" viewBox="0 0 16 16">
<g fill="none" stroke="#1a6fbf" stroke-width="1.3" stroke-linejoin="round" stroke-linecap="round">
<path d="M2 3.4 L7.7 0.6 L14.4 3.9 L14.4 10.9 L8.3 14.6"/>
<path d="M2 3.4 L8.3 6.9 L8.3 14.6"/>
<path d="M6.2 3.3 L11.3 5.8 L11.3 9.3 L9.7 11.8"/>
<path d="M1 5.3 L6.5 8.1 L6.5 14.3"/>
<path d="M2.1 9.3 L5.8 10.9"/>
<path d="M1.2 11.2 L6.3 14"/>
</g></svg>
<div style="position:absolute;left:29.5px;top:8.84px;font-size:12px;line-height:12px;color:#000;font-weight:normal;white-space:nowrap;letter-spacing:-0.2px">Edit Selection</div>
<svg style="position:absolute;left:519.0px;top:8.0px" width="12" height="12" viewBox="-6.0 -6.0 12 12"><path d="M-5.0 -5.0 L5.0 5.0 M5.0 -5.0 L-5.0 5.0" stroke="#1a1a1a" stroke-width="1.1"/></svg>
<div style="position:absolute;left:524px;top:29px;width:17px;height:870px;background:#f0f0f0"></div>
<div style="position:absolute;left:526px;top:48px;width:12px;height:580px;background:#c1c1c1"></div>
<svg style="position:absolute;left:527px;top:36px" width="10" height="6" viewBox="0 0 10 6"><path d="M1 5.5 L5 1 L9 5.5 Z" fill="#606060"/></svg>
<svg style="position:absolute;left:527px;top:887px" width="10" height="6" viewBox="0 0 10 6"><path d="M1 0.5 L5 5 L9 0.5 Z" fill="#606060"/></svg>
<svg style="position:absolute;left:13px;top:50.8px" width="52" height="38" viewBox="0 0 52 38">
<g fill="#1d3560">
<rect x="8.1" y="4.9" width="7.1" height="27.6" rx="3.55"/>
<path d="M11.65 8.45 L21.2 18.6" stroke="#1d3560" stroke-width="7.1" stroke-linecap="round"/>
<rect x="29.2" y="4.9" width="6.8" height="27.6" rx="3.4"/>
<rect x="29.2" y="25.9" width="15.7" height="6.6" rx="3.3"/>
</g>
<path d="M6 20.3 C 12 15.2, 26 9.2, 48 8.2 C 31 11, 18.5 17.8, 9.5 23.6 C 6.5 25.3, 4 23, 6 20.3 Z" fill="#e8384f" stroke="#fff" stroke-width="1.6" paint-order="stroke"/>
</svg>
<div style="position:absolute;left:81.5px;top:58.93px;font-size:24.3px;line-height:24.3px;color:#2d2d45;font-weight:bold;white-space:nowrap;">Edit Cabinets</div>
<div style="position:absolute;left:16px;top:126px;width:491px;height:138px;border:1.2px solid #d0d0d0;border-radius:8px"></div>
<div style="position:absolute;left:133px;top:143px;width:357px;height:31px;background:#e3e3e9"></div>
<div style="position:absolute;left:144.5px;top:153.34px;font-size:12px;line-height:12px;color:#333;font-weight:normal;white-space:nowrap;">BC-80W72H40D(P400)-3Dw-Profile(P400)</div>
<div style="position:absolute;left:133px;top:179px;width:357px;height:32px;border:1px solid #dedede"></div>
<div style="position:absolute;left:144.5px;top:188.84px;font-size:12px;line-height:12px;color:#a8a8a8;font-weight:normal;white-space:nowrap;">Selected Item Name</div>
<div style="position:absolute;left:133px;top:215px;width:357px;height:32px;border:1px solid #dedede"></div>
<div style="position:absolute;left:144px;top:231px;width:20px;height:1px;background:#c0c0c0"></div>
<div style="position:absolute;left:33px;top:147.70px;font-size:13px;line-height:13px;color:#6d6d7d;font-weight:bold;white-space:nowrap;">ID</div>
<div style="position:absolute;left:33px;top:184.00px;font-size:13px;line-height:13px;color:#6d6d7d;font-weight:bold;white-space:nowrap;">Name</div>
<div style="position:absolute;left:33px;top:220.00px;font-size:13px;line-height:13px;color:#6d6d7d;font-weight:bold;white-space:nowrap;">Price $</div>
<div style="position:absolute;left:16px;top:280px;width:491px;height:700px;border:1.2px solid #d0d0d0;border-radius:8px"></div>
<div style="position:absolute;left:29px;top:331.5px;width:465px;height:1px;background:#cfcfcf"></div>
<div style="position:absolute;left:29px;top:293px;width:69px;height:38.5px;background:#fff;border:1px solid #cfcfcf;border-bottom:none;border-top:2px solid #1a7ae6"></div>
<div style="position:absolute;left:40.299999999999955px;top:307.69px;font-size:11px;line-height:11px;color:#333;font-weight:bold;white-space:nowrap;">Materials</div>
<div style="position:absolute;left:98px;top:293px;width:53px;height:39px;background:#efefef;border:1px solid #cfcfcf;border-bottom:none"></div>
<div style="position:absolute;left:108.5px;top:306.99px;font-size:11px;line-height:11px;color:#333;font-weight:bold;white-space:nowrap;">Doors</div>
<div style="position:absolute;left:150px;top:293px;width:66px;height:39px;background:#efefef;border:1px solid #cfcfcf;border-bottom:none"></div>
<div style="position:absolute;left:160.5px;top:306.99px;font-size:11px;line-height:11px;color:#333;font-weight:bold;white-space:nowrap;">Drawers</div>
<div style="position:absolute;left:215px;top:293px;width:93px;height:39px;background:#efefef;border:1px solid #cfcfcf;border-bottom:none"></div>
<div style="position:absolute;left:225.5px;top:306.99px;font-size:11px;line-height:11px;color:#333;font-weight:bold;white-space:nowrap;">Door Handles</div>
<div style="position:absolute;left:307px;top:293px;width:107px;height:39px;background:#efefef;border:1px solid #cfcfcf;border-bottom:none"></div>
<div style="position:absolute;left:317.5px;top:306.99px;font-size:11px;line-height:11px;color:#333;font-weight:bold;white-space:nowrap;">Drawer Handles</div>
<div style="position:absolute;left:29px;top:349px;width:465px;height:375px;border:1.2px solid #d0d0d0;border-radius:8px"></div>
<div style="position:absolute;left:42px;top:365.86px;font-size:16.7px;line-height:16.7px;color:#2d2d45;font-weight:bold;white-space:nowrap;">Doors/Drawers Materials</div>
<div style="position:absolute;left:42px;top:403px;width:100px;height:100px;background:#cbcbcb"></div>
<svg style="position:absolute;left:50px;top:411px" width="84" height="84"><rect width="84" height="84" fill="#877866"/><rect y="0" width="84" height="1" fill="#887967"/><rect y="1" width="84" height="1" fill="#887967"/><rect y="2" width="84" height="1" fill="#8a7b68"/><rect y="3" width="84" height="1" fill="#8c7c6a"/><rect y="4" width="84" height="1" fill="#887967"/><rect y="5" width="84" height="1" fill="#8a7a68"/><rect y="6" width="84" height="1" fill="#92826e"/><rect y="7" width="84" height="1" fill="#92816e"/><rect y="8" width="84" height="1" fill="#968571"/><rect y="9" width="84" height="1" fill="#90806d"/><rect y="10" width="84" height="1" fill="#93826f"/><rect y="11" width="84" height="1" fill="#93826f"/><rect y="12" width="84" height="1" fill="#8d7d6a"/><rect y="13" width="84" height="1" fill="#90806d"/><rect y="14" width="84" height="1" fill="#8e7e6b"/><rect y="15" width="84" height="1" fill="#877866"/><rect y="16" width="84" height="1" fill="#887967"/><rect y="17" width="84" height="1" fill="#8c7c6a"/><rect y="18" width="84" height="1" fill="#8f7f6c"/><rect y="19" width="84" height="1" fill="#8a7b68"/><rect y="20" width="84" height="1" fill="#877866"/><rect y="21" width="84" height="1" fill="#877866"/><rect y="22" width="84" height="1" fill="#857664"/><rect y="23" width="84" height="1" fill="#857664"/><rect y="24" width="84" height="1" fill="#867765"/><rect y="25" width="84" height="1" fill="#867765"/><rect y="26" width="84" height="1" fill="#857664"/><rect y="27" width="84" height="1" fill="#847664"/><rect y="28" width="84" height="1" fill="#847563"/><rect y="29" width="84" height="1" fill="#847563"/><rect y="30" width="84" height="1" fill="#827362"/><rect y="31" width="84" height="1" fill="#817261"/><rect y="32" width="84" height="1" fill="#857664"/><rect y="33" width="84" height="1" fill="#857664"/><rect y="34" width="84" height="1" fill="#867766"/><rect y="35" width="84" height="1" fill="#867765"/><rect y="36" width="84" height="1" fill="#8c7d6a"/><rect y="37" width="84" height="1" fill="#8b7c69"/><rect y="38" width="84" height="1" fill="#867765"/><rect y="39" width="84" height="1" fill="#867765"/><rect y="40" width="84" height="1" fill="#867866"/><rect y="41" width="84" height="1" fill="#867765"/><rect y="42" width="84" height="1" fill="#867765"/><rect y="43" width="84" height="1" fill="#847563"/><rect y="44" width="84" height="1" fill="#857665"/><rect y="45" width="84" height="1" fill="#847564"/><rect y="46" width="84" height="1" fill="#827362"/><rect y="47" width="84" height="1" fill="#827462"/><rect y="48" width="84" height="1" fill="#837462"/><rect y="49" width="84" height="1" fill="#827462"/><rect y="50" width="84" height="1" fill="#827361"/><rect y="51" width="84" height="1" fill="#837463"/><rect y="52" width="84" height="1" fill="#827362"/><rect y="53" width="84" height="1" fill="#847563"/><rect y="54" width="84" height="1" fill="#877866"/><rect y="55" width="84" height="1" fill="#857664"/><rect y="56" width="84" height="1" fill="#847563"/><rect y="57" width="84" height="1" fill="#857664"/><rect y="58" width="84" height="1" fill="#857665"/><rect y="59" width="84" height="1" fill="#867765"/><rect y="60" width="84" height="1" fill="#857665"/><rect y="61" width="84" height="1" fill="#877866"/><rect y="62" width="84" height="1" fill="#8a7a68"/><rect y="63" width="84" height="1" fill="#8d7e6b"/><rect y="64" width="84" height="1" fill="#8d7d6a"/><rect y="65" width="84" height="1" fill="#8c7d6a"/><rect y="66" width="84" height="1" fill="#8d7e6b"/><rect y="67" width="84" height="1" fill="#8a7b69"/><rect y="68" width="84" height="1" fill="#8b7c69"/><rect y="69" width="84" height="1" fill="#91816e"/><rect y="70" width="84" height="1" fill="#948370"/><rect y="71" width="84" height="1" fill="#91816d"/><rect y="72" width="84" height="1" fill="#8e7e6b"/><rect y="73" width="84" height="1" fill="#8a7b69"/><rect y="74" width="84" height="1" fill="#8a7b68"/><rect y="75" width="84" height="1" fill="#8b7c69"/><rect y="76" width="84" height="1" fill="#887967"/><rect y="77" width="84" height="1" fill="#877866"/><rect y="78" width="84" height="1" fill="#8a7a68"/><rect y="79" width="84" height="1" fill="#877866"/><rect y="80" width="84" height="1" fill="#8b7b69"/><rect y="81" width="84" height="1" fill="#8f7f6c"/><rect y="82" width="84" height="1" fill="#8d7d6b"/><rect y="83" width="84" height="1" fill="#8c7c6a"/><rect x="26.0" y="22.6" width="62.9" height="1.3" fill="#978672" opacity="0.15"/><rect x="42.2" y="74.4" width="55.5" height="1.0" fill="#675b4b" opacity="0.33"/><rect x="53.1" y="4.7" width="43.5" height="1.0" fill="#675b4b" opacity="0.22"/><rect x="9.1" y="30.0" width="41.9" height="1.0" fill="#978672" opacity="0.37"/><rect x="-0.7" y="2.3" width="23.9" height="1.3" fill="#978672" opacity="0.35"/><rect x="48.6" y="67.0" width="27.8" height="0.7" fill="#978672" opacity="0.44"/><rect x="-18.8" y="1.4" width="52.8" height="1.2" fill="#675b4b" opacity="0.24"/><rect x="-14.2" y="28.9" width="23.0" height="0.8" fill="#675b4b" opacity="0.33"/><rect x="18.2" y="59.8" width="31.1" height="0.9" fill="#675b4b" opacity="0.32"/><rect x="-4.2" y="35.4" width="20.4" height="0.8" fill="#675b4b" opacity="0.46"/><rect x="48.6" y="50.9" width="16.0" height="1.2" fill="#675b4b" opacity="0.16"/><rect x="39.2" y="13.5" width="48.9" height="1.5" fill="#675b4b" opacity="0.34"/><rect x="23.4" y="67.0" width="26.2" height="1.1" fill="#675b4b" opacity="0.38"/><rect x="33.0" y="27.0" width="17.9" height="1.4" fill="#978672" opacity="0.25"/><rect x="52.1" y="25.7" width="30.5" height="1.0" fill="#978672" opacity="0.48"/><rect x="-19.3" y="21.2" width="58.9" height="1.5" fill="#978672" opacity="0.16"/><rect x="-5.6" y="47.9" width="58.4" height="1.1" fill="#978672" opacity="0.49"/><rect x="9.1" y="31.7" width="25.3" height="0.8" fill="#675b4b" opacity="0.39"/><rect x="35.9" y="8.8" width="29.8" height="1.4" fill="#675b4b" opacity="0.32"/><rect x="-18.5" y="75.6" width="25.0" height="1.3" fill="#978672" opacity="0.26"/><rect x="-2.1" y="28.5" width="48.7" height="0.9" fill="#978672" opacity="0.44"/><rect x="37.7" y="74.1" width="39.2" height="1.3" fill="#675b4b" opacity="0.49"/><rect x="-5.7" y="7.1" width="60.5" height="1.1" fill="#978672" opacity="0.22"/><rect x="10.9" y="70.7" width="32.0" height="1.1" fill="#978672" opacity="0.25"/><rect x="54.5" y="80.2" width="21.8" height="0.6" fill="#675b4b" opacity="0.34"/><rect x="52.8" y="6.1" width="54.4" height="1.2" fill="#675b4b" opacity="0.44"/><rect x="11.8" y="65.7" width="43.5" height="0.8" fill="#675b4b" opacity="0.23"/><rect x="27.4" y="74.8" width="61.3" height="1.3" fill="#675b4b" opacity="0.31"/><rect x="-19.0" y="69.5" width="48.5" height="1.4" fill="#675b4b" opacity="0.18"/><rect x="0.1" y="3.4" width="64.4" height="0.8" fill="#675b4b" opacity="0.30"/><rect x="42.5" y="20.3" width="20.1" height="1.5" fill="#675b4b" opacity="0.47"/><rect x="4.7" y="76.4" width="27.7" height="1.2" fill="#675b4b" opacity="0.32"/><rect x="-19.1" y="3.3" width="64.1" height="1.0" fill="#675b4b" opacity="0.25"/><rect x="-14.7" y="26.3" width="60.7" height="0.7" fill="#978672" opacity="0.49"/><rect x="31.9" y="18.1" width="64.0" height="1.2" fill="#978672" opacity="0.34"/><rect x="25.5" y="21.8" width="30.4" height="0.9" fill="#675b4b" opacity="0.24"/><rect x="17.6" y="82.6" width="47.6" height="1.0" fill="#978672" opacity="0.38"/><rect x="7.5" y="25.8" width="30.8" height="0.9" fill="#978672" opacity="0.45"/><rect x="25.7" y="28.1" width="43.9" height="0.6" fill="#675b4b" opacity="0.36"/><rect x="-13.9" y="20.5" width="42.6" height="1.2" fill="#675b4b" opacity="0.17"/><rect x="46.5" y="24.4" width="39.7" height="1.1" fill="#675b4b" opacity="0.45"/><rect x="-13.5" y="66.8" width="62.5" height="1.5" fill="#978672" opacity="0.21"/><rect x="6.9" y="69.0" width="20.3" height="0.9" fill="#978672" opacity="0.33"/><rect x="-8.1" y="75.1" width="60.5" height="1.4" fill="#675b4b" opacity="0.16"/><rect x="56.2" y="67.5" width="57.0" height="0.8" fill="#978672" opacity="0.41"/><rect x="-6.7" y="36.3" width="50.7" height="0.7" fill="#675b4b" opacity="0.38"/><rect x="47.9" y="80.9" width="42.5" height="1.0" fill="#978672" opacity="0.34"/><rect x="8.4" y="33.2" width="27.9" height="1.0" fill="#978672" opacity="0.16"/><rect x="-14.8" y="47.9" width="32.7" height="0.8" fill="#675b4b" opacity="0.20"/><rect x="13.4" y="69.6" width="35.1" height="0.6" fill="#675b4b" opacity="0.36"/><rect x="22.1" y="44.4" width="47.4" height="1.3" fill="#978672" opacity="0.30"/><rect x="21.6" y="20.0" width="38.9" height="1.1" fill="#675b4b" opacity="0.23"/><rect x="57.1" y="76.2" width="28.8" height="0.7" fill="#675b4b" opacity="0.38"/><rect x="53.7" y="43.0" width="23.0" height="0.9" fill="#978672" opacity="0.42"/><rect x="51.3" y="58.2" width="33.6" height="1.1" fill="#978672" opacity="0.40"/><rect x="55.3" y="71.9" width="63.0" height="0.8" fill="#675b4b" opacity="0.35"/><rect x="27.8" y="18.3" width="52.9" height="1.2" fill="#978672" opacity="0.17"/><rect x="23.3" y="29.2" width="23.2" height="1.5" fill="#675b4b" opacity="0.41"/><rect x="32.8" y="67.9" width="28.4" height="0.7" fill="#978672" opacity="0.47"/><rect x="50.7" y="65.2" width="48.0" height="1.4" fill="#675b4b" opacity="0.40"/><rect y="65" width="84" height="19" fill="rgba(0,0,0,0.5)"/></svg>
<div style="position:absolute;left:54px;top:479.69px;font-size:11px;line-height:11px;color:#fff;font-weight:bold;white-space:nowrap;">A406</div>
<div style="position:absolute;left:150px;top:403px;width:100px;height:100px;background:#cbcbcb"></div>
<svg style="position:absolute;left:158px;top:411px" width="84" height="84"><rect width="84" height="84" fill="#b3aea8"/><rect y="0" width="84" height="1" fill="#b5b0aa"/><rect y="1" width="84" height="1" fill="#b8b3ac"/><rect y="2" width="84" height="1" fill="#bab5ae"/><rect y="3" width="84" height="1" fill="#b7b2ac"/><rect y="4" width="84" height="1" fill="#bab5ae"/><rect y="5" width="84" height="1" fill="#b9b4ae"/><rect y="6" width="84" height="1" fill="#b9b4ad"/><rect y="7" width="84" height="1" fill="#b5b0aa"/><rect y="8" width="84" height="1" fill="#b9b4ad"/><rect y="9" width="84" height="1" fill="#bab4ae"/><rect y="10" width="84" height="1" fill="#bdb8b2"/><rect y="11" width="84" height="1" fill="#c0bbb4"/><rect y="12" width="84" height="1" fill="#bfb9b3"/><rect y="13" width="84" height="1" fill="#bab4ae"/><rect y="14" width="84" height="1" fill="#b8b3ad"/><rect y="15" width="84" height="1" fill="#b6b1ab"/><rect y="16" width="84" height="1" fill="#b5b0aa"/><rect y="17" width="84" height="1" fill="#b6b1ab"/><rect y="18" width="84" height="1" fill="#bcb7b0"/><rect y="19" width="84" height="1" fill="#bbb6af"/><rect y="20" width="84" height="1" fill="#bab5af"/><rect y="21" width="84" height="1" fill="#bdb7b1"/><rect y="22" width="84" height="1" fill="#b6b1ab"/><rect y="23" width="84" height="1" fill="#b4afa9"/><rect y="24" width="84" height="1" fill="#b1aca6"/><rect y="25" width="84" height="1" fill="#b1aba5"/><rect y="26" width="84" height="1" fill="#b3aea8"/><rect y="27" width="84" height="1" fill="#b3aea8"/><rect y="28" width="84" height="1" fill="#b9b4ad"/><rect y="29" width="84" height="1" fill="#bfbab3"/><rect y="30" width="84" height="1" fill="#bdb7b1"/><rect y="31" width="84" height="1" fill="#b8b3ad"/><rect y="32" width="84" height="1" fill="#bfb9b3"/><rect y="33" width="84" height="1" fill="#beb9b2"/><rect y="34" width="84" height="1" fill="#beb9b2"/><rect y="35" width="84" height="1" fill="#c0bbb5"/><rect y="36" width="84" height="1" fill="#bfbab3"/><rect y="37" width="84" height="1" fill="#beb9b2"/><rect y="38" width="84" height="1" fill="#b7b2ac"/><rect y="39" width="84" height="1" fill="#b9b4ae"/><rect y="40" width="84" height="1" fill="#b5b0aa"/><rect y="41" width="84" height="1" fill="#afaaa4"/><rect y="42" width="84" height="1" fill="#b1aca5"/><rect y="43" width="84" height="1" fill="#b0aba5"/><rect y="44" width="84" height="1" fill="#b0aaa4"/><rect y="45" width="84" height="1" fill="#b0aba5"/><rect y="46" width="84" height="1" fill="#b1aca5"/><rect y="47" width="84" height="1" fill="#b2ada7"/><rect y="48" width="84" height="1" fill="#b0aba5"/><rect y="49" width="84" height="1" fill="#b0aba5"/><rect y="50" width="84" height="1" fill="#aea8a2"/><rect y="51" width="84" height="1" fill="#afaaa4"/><rect y="52" width="84" height="1" fill="#afaaa4"/><rect y="53" width="84" height="1" fill="#aea9a3"/><rect y="54" width="84" height="1" fill="#afaaa4"/><rect y="55" width="84" height="1" fill="#b1aca6"/><rect y="56" width="84" height="1" fill="#b0aba5"/><rect y="57" width="84" height="1" fill="#afaaa4"/><rect y="58" width="84" height="1" fill="#aea9a2"/><rect y="59" width="84" height="1" fill="#afa9a3"/><rect y="60" width="84" height="1" fill="#b1aca6"/><rect y="61" width="84" height="1" fill="#b0aba5"/><rect y="62" width="84" height="1" fill="#b7b2ac"/><rect y="63" width="84" height="1" fill="#b4afa9"/><rect y="64" width="84" height="1" fill="#bbb6b0"/><rect y="65" width="84" height="1" fill="#b5b0aa"/><rect y="66" width="84" height="1" fill="#bab5ae"/><rect y="67" width="84" height="1" fill="#b4afa9"/><rect y="68" width="84" height="1" fill="#b1aca6"/><rect y="69" width="84" height="1" fill="#b1aca6"/><rect y="70" width="84" height="1" fill="#b1aca6"/><rect y="71" width="84" height="1" fill="#b1aca6"/><rect y="72" width="84" height="1" fill="#b0aba5"/><rect y="73" width="84" height="1" fill="#b0aba5"/><rect y="74" width="84" height="1" fill="#b2ada7"/><rect y="75" width="84" height="1" fill="#b4afa9"/><rect y="76" width="84" height="1" fill="#b2ada7"/><rect y="77" width="84" height="1" fill="#b0aba5"/><rect y="78" width="84" height="1" fill="#b5b0aa"/><rect y="79" width="84" height="1" fill="#b7b2ac"/><rect y="80" width="84" height="1" fill="#bbb6b0"/><rect y="81" width="84" height="1" fill="#b7b2ac"/><rect y="82" width="84" height="1" fill="#beb9b2"/><rect y="83" width="84" height="1" fill="#b7b2ac"/><rect x="2.9" y="54.8" width="26.3" height="1.1" fill="#938d86" opacity="0.46"/><rect x="0.6" y="71.7" width="25.5" height="1.2" fill="#938d86" opacity="0.46"/><rect x="10.4" y="2.7" width="23.6" height="1.5" fill="#938d86" opacity="0.39"/><rect x="41.3" y="2.1" width="16.1" height="0.7" fill="#c8c3bc" opacity="0.24"/><rect x="38.1" y="15.4" width="34.3" height="0.7" fill="#c8c3bc" opacity="0.17"/><rect x="8.9" y="3.0" width="45.8" height="0.9" fill="#938d86" opacity="0.41"/><rect x="17.7" y="2.6" width="53.3" height="1.3" fill="#c8c3bc" opacity="0.41"/><rect x="39.2" y="72.4" width="38.6" height="0.9" fill="#c8c3bc" opacity="0.23"/><rect x="17.6" y="8.6" width="58.7" height="1.0" fill="#938d86" opacity="0.19"/><rect x="-7.9" y="43.2" width="63.0" height="1.0" fill="#c8c3bc" opacity="0.24"/><rect x="26.9" y="1.5" width="22.0" height="0.7" fill="#938d86" opacity="0.17"/><rect x="33.3" y="8.1" width="40.4" height="1.5" fill="#c8c3bc" opacity="0.49"/><rect x="17.4" y="19.5" width="27.5" height="1.3" fill="#c8c3bc" opacity="0.36"/><rect x="1.6" y="59.6" width="36.2" height="0.6" fill="#938d86" opacity="0.33"/><rect x="-10.7" y="34.3" width="51.2" height="0.8" fill="#938d86" opacity="0.23"/><rect x="-1.7" y="19.4" width="41.0" height="1.2" fill="#938d86" opacity="0.31"/><rect x="56.2" y="17.8" width="63.2" height="1.1" fill="#938d86" opacity="0.41"/><rect x="-15.7" y="48.8" width="35.9" height="0.7" fill="#938d86" opacity="0.33"/><rect x="10.8" y="67.4" width="41.0" height="0.9" fill="#c8c3bc" opacity="0.47"/><rect x="11.3" y="82.6" width="16.0" height="0.9" fill="#938d86" opacity="0.39"/><rect x="36.5" y="70.6" width="15.8" height="1.0" fill="#938d86" opacity="0.31"/><rect x="29.5" y="17.5" width="18.7" height="1.4" fill="#938d86" opacity="0.25"/><rect x="43.4" y="6.4" width="24.6" height="1.0" fill="#938d86" opacity="0.35"/><rect x="13.2" y="63.3" width="21.1" height="1.4" fill="#938d86" opacity="0.19"/><rect x="60.6" y="53.8" width="49.6" height="1.3" fill="#c8c3bc" opacity="0.16"/><rect x="21.8" y="60.8" width="32.9" height="0.8" fill="#c8c3bc" opacity="0.31"/><rect x="20.1" y="44.2" width="62.7" height="1.4" fill="#c8c3bc" opacity="0.43"/><rect x="-0.5" y="24.9" width="39.4" height="1.2" fill="#938d86" opacity="0.24"/><rect x="29.2" y="77.2" width="55.9" height="1.5" fill="#938d86" opacity="0.18"/><rect x="15.0" y="12.3" width="18.3" height="1.5" fill="#c8c3bc" opacity="0.18"/><rect x="-9.2" y="54.4" width="29.8" height="1.2" fill="#c8c3bc" opacity="0.23"/><rect x="24.0" y="36.9" width="20.6" height="1.3" fill="#c8c3bc" opacity="0.34"/><rect x="23.4" y="8.1" width="50.8" height="1.0" fill="#c8c3bc" opacity="0.24"/><rect x="13.9" y="59.1" width="64.8" height="0.7" fill="#938d86" opacity="0.42"/><rect x="-17.5" y="37.1" width="44.8" height="1.1" fill="#938d86" opacity="0.46"/><rect x="14.0" y="40.5" width="50.5" height="1.0" fill="#c8c3bc" opacity="0.48"/><rect x="7.8" y="80.8" width="52.3" height="1.4" fill="#c8c3bc" opacity="0.38"/><rect x="32.2" y="18.9" width="35.1" height="1.2" fill="#c8c3bc" opacity="0.38"/><rect x="19.0" y="1.0" width="50.6" height="1.3" fill="#c8c3bc" opacity="0.46"/><rect x="59.2" y="1.4" width="51.5" height="1.4" fill="#c8c3bc" opacity="0.36"/><rect x="48.5" y="8.4" width="53.4" height="1.1" fill="#c8c3bc" opacity="0.22"/><rect x="47.6" y="16.1" width="21.9" height="0.8" fill="#938d86" opacity="0.36"/><rect x="19.2" y="47.6" width="25.2" height="0.6" fill="#938d86" opacity="0.49"/><rect x="50.3" y="40.8" width="47.9" height="1.2" fill="#938d86" opacity="0.41"/><rect x="2.4" y="28.1" width="40.1" height="1.3" fill="#938d86" opacity="0.16"/><rect x="43.0" y="14.6" width="54.2" height="1.3" fill="#c8c3bc" opacity="0.29"/><rect x="-8.7" y="72.6" width="23.1" height="0.9" fill="#938d86" opacity="0.28"/><rect x="26.8" y="0.9" width="63.3" height="0.9" fill="#938d86" opacity="0.28"/><rect x="53.1" y="37.2" width="30.4" height="1.1" fill="#938d86" opacity="0.38"/><rect x="-13.6" y="76.8" width="56.2" height="1.3" fill="#c8c3bc" opacity="0.26"/><rect x="13.0" y="54.9" width="57.0" height="1.0" fill="#c8c3bc" opacity="0.18"/><rect x="51.5" y="44.6" width="54.9" height="0.8" fill="#938d86" opacity="0.37"/><rect x="-0.5" y="38.4" width="28.9" height="1.3" fill="#938d86" opacity="0.49"/><rect x="10.6" y="31.9" width="30.9" height="0.7" fill="#938d86" opacity="0.18"/><rect x="4.5" y="37.1" width="59.7" height="1.2" fill="#938d86" opacity="0.47"/><rect x="7.4" y="78.1" width="20.0" height="1.2" fill="#938d86" opacity="0.23"/><rect x="9.9" y="31.4" width="54.8" height="1.2" fill="#c8c3bc" opacity="0.23"/><rect x="49.2" y="33.6" width="32.1" height="1.1" fill="#c8c3bc" opacity="0.46"/><rect x="59.7" y="58.0" width="52.1" height="1.4" fill="#c8c3bc" opacity="0.41"/><rect x="62.2" y="63.3" width="29.6" height="0.9" fill="#c8c3bc" opacity="0.37"/><rect y="65" width="84" height="19" fill="rgba(0,0,0,0.5)"/></svg>
<div style="position:absolute;left:162px;top:479.69px;font-size:11px;line-height:11px;color:#fff;font-weight:bold;white-space:nowrap;">A411</div>
<div style="position:absolute;left:257px;top:403px;width:100px;height:100px;background:#cbcbcb"></div>
<svg style="position:absolute;left:265px;top:411px" width="84" height="84"><rect width="84" height="84" fill="#8f7053"/><rect y="0" width="84" height="1" fill="#967657"/><rect y="1" width="84" height="1" fill="#8f7053"/><rect y="2" width="84" height="1" fill="#8e6f52"/><rect y="3" width="84" height="1" fill="#937355"/><rect y="4" width="84" height="1" fill="#8f7053"/><rect y="5" width="84" height="1" fill="#8f7053"/><rect y="6" width="84" height="1" fill="#947456"/><rect y="7" width="84" height="1" fill="#907053"/><rect y="8" width="84" height="1" fill="#927255"/><rect y="9" width="84" height="1" fill="#8f7053"/><rect y="10" width="84" height="1" fill="#917154"/><rect y="11" width="84" height="1" fill="#8f7053"/><rect y="12" width="84" height="1" fill="#947456"/><rect y="13" width="84" height="1" fill="#987758"/><rect y="14" width="84" height="1" fill="#977658"/><rect y="15" width="84" height="1" fill="#997859"/><rect y="16" width="84" height="1" fill="#977658"/><rect y="17" width="84" height="1" fill="#907154"/><rect y="18" width="84" height="1" fill="#937355"/><rect y="19" width="84" height="1" fill="#907053"/><rect y="20" width="84" height="1" fill="#8d6e52"/><rect y="21" width="84" height="1" fill="#8c6d51"/><rect y="22" width="84" height="1" fill="#917254"/><rect y="23" width="84" height="1" fill="#8f7053"/><rect y="24" width="84" height="1" fill="#907154"/><rect y="25" width="84" height="1" fill="#917154"/><rect y="26" width="84" height="1" fill="#8e6f52"/><rect y="27" width="84" height="1" fill="#8e6f52"/><rect y="28" width="84" height="1" fill="#8b6c50"/><rect y="29" width="84" height="1" fill="#8c6d51"/><rect y="30" width="84" height="1" fill="#8a6c4f"/><rect y="31" width="84" height="1" fill="#8d6e51"/><rect y="32" width="84" height="1" fill="#8c6d51"/><rect y="33" width="84" height="1" fill="#88694d"/><rect y="34" width="84" height="1" fill="#87694d"/><rect y="35" width="84" height="1" fill="#86684c"/><rect y="36" width="84" height="1" fill="#896b4e"/><rect y="37" width="84" height="1" fill="#86684c"/><rect y="38" width="84" height="1" fill="#886a4e"/><rect y="39" width="84" height="1" fill="#886a4e"/><rect y="40" width="84" height="1" fill="#8c6d50"/><rect y="41" width="84" height="1" fill="#8d6e51"/><rect y="42" width="84" height="1" fill="#8e6f52"/><rect y="43" width="84" height="1" fill="#917154"/><rect y="44" width="84" height="1" fill="#917154"/><rect y="45" width="84" height="1" fill="#937355"/><rect y="46" width="84" height="1" fill="#907154"/><rect y="47" width="84" height="1" fill="#927255"/><rect y="48" width="84" height="1" fill="#927255"/><rect y="49" width="84" height="1" fill="#937356"/><rect y="50" width="84" height="1" fill="#917254"/><rect y="51" width="84" height="1" fill="#8d6f52"/><rect y="52" width="84" height="1" fill="#917254"/><rect y="53" width="84" height="1" fill="#907154"/><rect y="54" width="84" height="1" fill="#8f7053"/><rect y="55" width="84" height="1" fill="#8e6f52"/><rect y="56" width="84" height="1" fill="#8f7053"/><rect y="57" width="84" height="1" fill="#8e6f52"/><rect y="58" width="84" height="1" fill="#947456"/><rect y="59" width="84" height="1" fill="#937356"/><rect y="60" width="84" height="1" fill="#927254"/><rect y="61" width="84" height="1" fill="#8f7053"/><rect y="62" width="84" height="1" fill="#947456"/><rect y="63" width="84" height="1" fill="#947456"/><rect y="64" width="84" height="1" fill="#8d6e51"/><rect y="65" width="84" height="1" fill="#927255"/><rect y="66" width="84" height="1" fill="#907154"/><rect y="67" width="84" height="1" fill="#917154"/><rect y="68" width="84" height="1" fill="#947456"/><rect y="69" width="84" height="1" fill="#997859"/><rect y="70" width="84" height="1" fill="#9b795a"/><rect y="71" width="84" height="1" fill="#957556"/><rect y="72" width="84" height="1" fill="#997859"/><rect y="73" width="84" height="1" fill="#967557"/><rect y="74" width="84" height="1" fill="#9c7a5a"/><rect y="75" width="84" height="1" fill="#997859"/><rect y="76" width="84" height="1" fill="#9e7c5c"/><rect y="77" width="84" height="1" fill="#9e7c5c"/><rect y="78" width="84" height="1" fill="#997859"/><rect y="79" width="84" height="1" fill="#9a7859"/><rect y="80" width="84" height="1" fill="#917154"/><rect y="81" width="84" height="1" fill="#8d6e51"/><rect y="82" width="84" height="1" fill="#8e6f52"/><rect y="83" width="84" height="1" fill="#8b6c50"/><rect x="14.3" y="16.6" width="45.5" height="1.4" fill="#6a4f36" opacity="0.20"/><rect x="60.5" y="26.4" width="59.8" height="1.1" fill="#6a4f36" opacity="0.28"/><rect x="30.0" y="54.1" width="43.0" height="1.1" fill="#a07d5d" opacity="0.37"/><rect x="40.5" y="36.2" width="26.9" height="1.1" fill="#a07d5d" opacity="0.26"/><rect x="-19.0" y="46.1" width="35.8" height="1.2" fill="#6a4f36" opacity="0.35"/><rect x="-15.0" y="53.1" width="46.4" height="0.9" fill="#a07d5d" opacity="0.31"/><rect x="42.0" y="59.4" width="16.1" height="1.5" fill="#a07d5d" opacity="0.17"/><rect x="18.3" y="21.1" width="44.6" height="0.9" fill="#6a4f36" opacity="0.26"/><rect x="30.0" y="31.0" width="30.0" height="0.6" fill="#a07d5d" opacity="0.28"/><rect x="41.8" y="47.8" width="30.5" height="0.8" fill="#a07d5d" opacity="0.23"/><rect x="16.6" y="15.7" width="49.9" height="0.9" fill="#6a4f36" opacity="0.19"/><rect x="16.8" y="70.0" width="57.8" height="1.2" fill="#6a4f36" opacity="0.21"/><rect x="17.9" y="74.3" width="26.3" height="0.8" fill="#6a4f36" opacity="0.19"/><rect x="50.4" y="67.8" width="24.2" height="1.2" fill="#a07d5d" opacity="0.25"/><rect x="9.0" y="67.7" width="21.5" height="0.8" fill="#a07d5d" opacity="0.25"/><rect x="15.0" y="29.1" width="36.0" height="0.7" fill="#a07d5d" opacity="0.29"/><rect x="59.2" y="0.4" width="59.0" height="1.5" fill="#6a4f36" opacity="0.50"/><rect x="-1.3" y="77.9" width="52.3" height="1.1" fill="#a07d5d" opacity="0.44"/><rect x="8.6" y="24.3" width="26.4" height="0.9" fill="#6a4f36" opacity="0.17"/><rect x="-16.2" y="68.1" width="60.2" height="1.4" fill="#a07d5d" opacity="0.39"/><rect x="28.5" y="75.6" width="15.7" height="0.9" fill="#6a4f36" opacity="0.41"/><rect x="24.1" y="55.7" width="35.7" height="0.9" fill="#a07d5d" opacity="0.48"/><rect x="52.4" y="21.2" width="38.9" height="0.8" fill="#6a4f36" opacity="0.42"/><rect x="48.6" y="44.9" width="23.6" height="1.3" fill="#a07d5d" opacity="0.43"/><rect x="-19.4" y="69.2" width="46.4" height="0.8" fill="#6a4f36" opacity="0.45"/><rect x="24.3" y="22.6" width="36.1" height="0.6" fill="#a07d5d" opacity="0.32"/><rect x="-9.3" y="4.6" width="21.2" height="1.4" fill="#a07d5d" opacity="0.17"/><rect x="22.2" y="7.2" width="30.8" height="1.2" fill="#6a4f36" opacity="0.26"/><rect x="10.3" y="49.3" width="24.6" height="1.1" fill="#6a4f36" opacity="0.27"/><rect x="11.9" y="60.1" width="19.0" height="1.1" fill="#6a4f36" opacity="0.21"/><rect x="11.9" y="65.7" width="55.1" height="0.9" fill="#6a4f36" opacity="0.37"/><rect x="39.0" y="41.7" width="36.0" height="0.8" fill="#6a4f36" opacity="0.39"/><rect x="38.4" y="45.0" width="18.6" height="1.4" fill="#6a4f36" opacity="0.30"/><rect x="11.4" y="78.7" width="59.9" height="1.0" fill="#6a4f36" opacity="0.43"/><rect x="48.3" y="10.3" width="48.1" height="1.2" fill="#a07d5d" opacity="0.46"/><rect x="27.4" y="61.6" width="20.2" height="0.7" fill="#6a4f36" opacity="0.36"/><rect x="-16.3" y="65.0" width="19.6" height="0.8" fill="#a07d5d" opacity="0.18"/><rect x="50.7" y="2.0" width="21.1" height="1.4" fill="#a07d5d" opacity="0.45"/><rect x="28.6" y="80.0" width="54.9" height="1.1" fill="#a07d5d" opacity="0.16"/><rect x="-11.0" y="60.1" width="52.4" height="0.9" fill="#6a4f36" opacity="0.48"/><rect x="49.6" y="47.4" width="27.1" height="1.2" fill="#6a4f36" opacity="0.21"/><rect x="13.1" y="63.3" width="33.4" height="1.0" fill="#6a4f36" opacity="0.29"/><rect x="22.0" y="7.0" width="63.7" height="0.7" fill="#a07d5d" opacity="0.29"/><rect x="43.5" y="58.0" width="48.7" height="1.2" fill="#6a4f36" opacity="0.33"/><rect x="-7.5" y="75.4" width="19.8" height="1.1" fill="#a07d5d" opacity="0.41"/><rect x="40.4" y="37.2" width="24.3" height="1.1" fill="#6a4f36" opacity="0.24"/><rect x="-0.5" y="26.4" width="49.6" height="1.2" fill="#6a4f36" opacity="0.48"/><rect x="51.7" y="34.7" width="44.2" height="0.6" fill="#6a4f36" opacity="0.24"/><rect x="12.2" y="40.3" width="23.6" height="1.3" fill="#6a4f36" opacity="0.28"/><rect x="63.3" y="12.1" width="39.0" height="1.4" fill="#6a4f36" opacity="0.36"/><rect x="26.8" y="69.0" width="39.1" height="1.0" fill="#a07d5d" opacity="0.40"/><rect x="60.7" y="61.6" width="38.4" height="1.2" fill="#6a4f36" opacity="0.23"/><rect x="60.5" y="56.7" width="57.7" height="0.8" fill="#6a4f36" opacity="0.23"/><rect x="39.2" y="15.7" width="57.9" height="1.4" fill="#6a4f36" opacity="0.46"/><rect x="15.6" y="26.3" width="51.4" height="1.4" fill="#6a4f36" opacity="0.18"/><rect x="10.0" y="24.5" width="44.0" height="0.9" fill="#6a4f36" opacity="0.39"/><rect x="20.8" y="36.6" width="25.5" height="1.0" fill="#a07d5d" opacity="0.35"/><rect x="-10.0" y="45.7" width="28.7" height="1.4" fill="#6a4f36" opacity="0.38"/><rect x="-11.9" y="76.3" width="62.1" height="1.3" fill="#a07d5d" opacity="0.28"/><rect x="36.8" y="24.8" width="47.7" height="1.3" fill="#6a4f36" opacity="0.43"/><rect y="65" width="84" height="19" fill="rgba(0,0,0,0.5)"/></svg>
<div style="position:absolute;left:269px;top:479.69px;font-size:11px;line-height:11px;color:#fff;font-weight:bold;white-space:nowrap;">A422</div>
<div style="position:absolute;left:365px;top:403px;width:100px;height:100px;background:#cbcbcb"></div>
<svg style="position:absolute;left:373px;top:411px" width="84" height="84"><rect width="84" height="84" fill="#4f3424"/><rect y="0" width="84" height="1" fill="#543726"/><rect y="1" width="84" height="1" fill="#553827"/><rect y="2" width="84" height="1" fill="#573928"/><rect y="3" width="84" height="1" fill="#553827"/><rect y="4" width="84" height="1" fill="#543726"/><rect y="5" width="84" height="1" fill="#513525"/><rect y="6" width="84" height="1" fill="#523625"/><rect y="7" width="84" height="1" fill="#513525"/><rect y="8" width="84" height="1" fill="#513625"/><rect y="9" width="84" height="1" fill="#523625"/><rect y="10" width="84" height="1" fill="#523625"/><rect y="11" width="84" height="1" fill="#553827"/><rect y="12" width="84" height="1" fill="#533726"/><rect y="13" width="84" height="1" fill="#523625"/><rect y="14" width="84" height="1" fill="#513525"/><rect y="15" width="84" height="1" fill="#4e3323"/><rect y="16" width="84" height="1" fill="#4e3323"/><rect y="17" width="84" height="1" fill="#4e3424"/><rect y="18" width="84" height="1" fill="#4f3424"/><rect y="19" width="84" height="1" fill="#4f3424"/><rect y="20" width="84" height="1" fill="#4e3323"/><rect y="21" width="84" height="1" fill="#4b3122"/><rect y="22" width="84" height="1" fill="#4d3222"/><rect y="23" width="84" height="1" fill="#4d3223"/><rect y="24" width="84" height="1" fill="#4d3223"/><rect y="25" width="84" height="1" fill="#4d3223"/><rect y="26" width="84" height="1" fill="#4f3424"/><rect y="27" width="84" height="1" fill="#4e3424"/><rect y="28" width="84" height="1" fill="#523625"/><rect y="29" width="84" height="1" fill="#523625"/><rect y="30" width="84" height="1" fill="#4f3424"/><rect y="31" width="84" height="1" fill="#4e3323"/><rect y="32" width="84" height="1" fill="#4f3424"/><rect y="33" width="84" height="1" fill="#4d3323"/><rect y="34" width="84" height="1" fill="#4e3323"/><rect y="35" width="84" height="1" fill="#4e3323"/><rect y="36" width="84" height="1" fill="#4d3323"/><rect y="37" width="84" height="1" fill="#4d3222"/><rect y="38" width="84" height="1" fill="#4d3223"/><rect y="39" width="84" height="1" fill="#4c3222"/><rect y="40" width="84" height="1" fill="#4b3121"/><rect y="41" width="84" height="1" fill="#4b3122"/><rect y="42" width="84" height="1" fill="#4d3223"/><rect y="43" width="84" height="1" fill="#4b3122"/><rect y="44" width="84" height="1" fill="#4c3222"/><rect y="45" width="84" height="1" fill="#4e3323"/><rect y="46" width="84" height="1" fill="#4d3223"/><rect y="47" width="84" height="1" fill="#4d3323"/><rect y="48" width="84" height="1" fill="#4d3222"/><rect y="49" width="84" height="1" fill="#4c3222"/><rect y="50" width="84" height="1" fill="#4e3323"/><rect y="51" width="84" height="1" fill="#4c3222"/><rect y="52" width="84" height="1" fill="#4d3323"/><rect y="53" width="84" height="1" fill="#4e3323"/><rect y="54" width="84" height="1" fill="#513525"/><rect y="55" width="84" height="1" fill="#513525"/><rect y="56" width="84" height="1" fill="#523625"/><rect y="57" width="84" height="1" fill="#543726"/><rect y="58" width="84" height="1" fill="#523626"/><rect y="59" width="84" height="1" fill="#533726"/><rect y="60" width="84" height="1" fill="#553827"/><rect y="61" width="84" height="1" fill="#523625"/><rect y="62" width="84" height="1" fill="#523625"/><rect y="63" width="84" height="1" fill="#533626"/><rect y="64" width="84" height="1" fill="#543726"/><rect y="65" width="84" height="1" fill="#523626"/><rect y="66" width="84" height="1" fill="#4f3424"/><rect y="67" width="84" height="1" fill="#4f3424"/><rect y="68" width="84" height="1" fill="#4e3323"/><rect y="69" width="84" height="1" fill="#4f3424"/><rect y="70" width="84" height="1" fill="#4e3424"/><rect y="71" width="84" height="1" fill="#523625"/><rect y="72" width="84" height="1" fill="#543726"/><rect y="73" width="84" height="1" fill="#553827"/><rect y="74" width="84" height="1" fill="#533726"/><rect y="75" width="84" height="1" fill="#543726"/><rect y="76" width="84" height="1" fill="#4f3424"/><rect y="77" width="84" height="1" fill="#503424"/><rect y="78" width="84" height="1" fill="#533626"/><rect y="79" width="84" height="1" fill="#523625"/><rect y="80" width="84" height="1" fill="#513525"/><rect y="81" width="84" height="1" fill="#543726"/><rect y="82" width="84" height="1" fill="#523626"/><rect y="83" width="84" height="1" fill="#533726"/><rect x="-3.9" y="24.6" width="37.2" height="1.5" fill="#3a2416" opacity="0.20"/><rect x="-19.2" y="27.8" width="17.2" height="0.9" fill="#583a28" opacity="0.21"/><rect x="-11.8" y="24.4" width="64.1" height="0.7" fill="#3a2416" opacity="0.30"/><rect x="-5.8" y="4.6" width="48.8" height="1.0" fill="#3a2416" opacity="0.20"/><rect x="63.8" y="20.9" width="21.1" height="1.0" fill="#583a28" opacity="0.34"/><rect x="20.1" y="83.0" width="27.1" height="1.0" fill="#3a2416" opacity="0.29"/><rect x="54.7" y="20.9" width="56.6" height="0.8" fill="#3a2416" opacity="0.32"/><rect x="-2.5" y="20.4" width="26.6" height="0.6" fill="#3a2416" opacity="0.45"/><rect x="27.5" y="78.0" width="64.5" height="1.2" fill="#583a28" opacity="0.29"/><rect x="42.6" y="66.4" width="39.7" height="1.4" fill="#3a2416" opacity="0.18"/><rect x="57.7" y="75.6" width="31.8" height="1.2" fill="#583a28" opacity="0.38"/><rect x="24.4" y="68.4" width="47.7" height="1.4" fill="#3a2416" opacity="0.39"/><rect x="-13.8" y="80.3" width="63.6" height="0.6" fill="#583a28" opacity="0.49"/><rect x="-9.3" y="75.5" width="63.4" height="0.8" fill="#3a2416" opacity="0.38"/><rect x="27.8" y="53.4" width="52.3" height="0.6" fill="#3a2416" opacity="0.47"/><rect x="-18.9" y="77.5" width="58.8" height="1.3" fill="#583a28" opacity="0.19"/><rect x="26.3" y="73.7" width="58.9" height="0.9" fill="#583a28" opacity="0.22"/><rect x="45.0" y="74.9" width="38.6" height="0.6" fill="#3a2416" opacity="0.33"/><rect x="21.1" y="49.9" width="58.2" height="0.9" fill="#3a2416" opacity="0.36"/><rect x="23.9" y="64.5" width="15.5" height="0.7" fill="#583a28" opacity="0.44"/><rect x="12.0" y="45.6" width="54.4" height="1.0" fill="#3a2416" opacity="0.26"/><rect x="-12.0" y="81.2" width="20.7" height="1.1" fill="#583a28" opacity="0.37"/><rect x="52.1" y="36.5" width="53.8" height="0.8" fill="#583a28" opacity="0.17"/><rect x="50.3" y="25.4" width="36.1" height="1.4" fill="#3a2416" opacity="0.43"/><rect x="-7.5" y="14.8" width="39.7" height="1.4" fill="#3a2416" opacity="0.27"/><rect x="-19.5" y="59.7" width="30.6" height="1.2" fill="#3a2416" opacity="0.34"/><rect x="-13.6" y="40.7" width="27.3" height="1.3" fill="#3a2416" opacity="0.45"/><rect x="32.6" y="82.8" width="48.8" height="1.4" fill="#3a2416" opacity="0.36"/><rect x="56.6" y="39.2" width="30.3" height="1.2" fill="#583a28" opacity="0.45"/><rect x="-8.2" y="37.1" width="53.6" height="0.7" fill="#583a28" opacity="0.28"/><rect x="-7.9" y="6.9" width="55.5" height="0.9" fill="#583a28" opacity="0.21"/><rect x="9.4" y="48.4" width="46.0" height="1.4" fill="#3a2416" opacity="0.18"/><rect x="35.0" y="15.1" width="31.3" height="0.6" fill="#3a2416" opacity="0.26"/><rect x="49.7" y="79.7" width="55.1" height="0.7" fill="#583a28" opacity="0.43"/><rect x="21.6" y="49.1" width="43.7" height="1.5" fill="#583a28" opacity="0.48"/><rect x="34.7" y="9.8" width="48.8" height="1.3" fill="#583a28" opacity="0.41"/><rect x="57.9" y="25.4" width="35.3" height="1.2" fill="#583a28" opacity="0.36"/><rect x="-0.6" y="26.0" width="31.3" height="1.4" fill="#583a28" opacity="0.37"/><rect x="13.7" y="33.6" width="55.9" height="0.6" fill="#3a2416" opacity="0.25"/><rect x="25.4" y="15.4" width="49.7" height="1.5" fill="#3a2416" opacity="0.37"/><rect x="-6.9" y="52.4" width="18.4" height="1.4" fill="#583a28" opacity="0.49"/><rect x="6.2" y="50.7" width="19.6" height="1.4" fill="#3a2416" opacity="0.24"/><rect x="45.3" y="75.0" width="22.4" height="1.5" fill="#3a2416" opacity="0.23"/><rect x="46.4" y="13.7" width="49.0" height="0.8" fill="#583a28" opacity="0.34"/><rect x="-6.8" y="44.0" width="19.8" height="0.7" fill="#3a2416" opacity="0.16"/><rect x="63.4" y="5.1" width="29.5" height="1.3" fill="#583a28" opacity="0.46"/><rect x="60.0" y="55.0" width="58.9" height="1.2" fill="#3a2416" opacity="0.40"/><rect x="26.4" y="60.8" width="40.1" height="1.0" fill="#583a28" opacity="0.20"/><rect x="-5.9" y="5.7" width="58.7" height="1.2" fill="#3a2416" opacity="0.24"/><rect x="7.6" y="72.4" width="34.3" height="1.4" fill="#3a2416" opacity="0.30"/><rect x="60.6" y="1.6" width="22.6" height="1.3" fill="#583a28" opacity="0.20"/><rect x="26.5" y="19.5" width="38.8" height="1.3" fill="#3a2416" opacity="0.40"/><rect x="39.3" y="83.7" width="61.1" height="1.4" fill="#3a2416" opacity="0.48"/><rect x="29.3" y="70.0" width="20.4" height="0.9" fill="#583a28" opacity="0.37"/><rect x="55.4" y="54.3" width="45.0" height="0.8" fill="#583a28" opacity="0.16"/><rect x="35.6" y="72.1" width="30.4" height="0.9" fill="#583a28" opacity="0.46"/><rect x="54.9" y="70.1" width="59.7" height="1.2" fill="#583a28" opacity="0.46"/><rect x="24.3" y="50.8" width="64.4" height="1.2" fill="#3a2416" opacity="0.27"/><rect x="25.8" y="41.8" width="44.9" height="0.7" fill="#3a2416" opacity="0.24"/><rect x="56.3" y="65.7" width="49.8" height="1.3" fill="#583a28" opacity="0.19"/><rect y="65" width="84" height="19" fill="rgba(0,0,0,0.5)"/></svg>
<div style="position:absolute;left:377px;top:479.69px;font-size:11px;line-height:11px;color:#fff;font-weight:bold;white-space:nowrap;">A432</div>
<div style="position:absolute;left:42px;top:507px;width:100px;height:100px;background:#cbcbcb"></div>
<svg style="position:absolute;left:50px;top:515px" width="84" height="84"><rect width="84" height="84" fill="#766d61"/><rect y="0" width="84" height="1" fill="#71685c"/><rect y="1" width="84" height="1" fill="#72695e"/><rect y="2" width="84" height="1" fill="#6f675b"/><rect y="3" width="84" height="1" fill="#72695d"/><rect y="4" width="84" height="1" fill="#746c60"/><rect y="5" width="84" height="1" fill="#736a5f"/><rect y="6" width="84" height="1" fill="#746b60"/><rect y="7" width="84" height="1" fill="#71685d"/><rect y="8" width="84" height="1" fill="#736a5e"/><rect y="9" width="84" height="1" fill="#736a5e"/><rect y="10" width="84" height="1" fill="#756c60"/><rect y="11" width="84" height="1" fill="#756c60"/><rect y="12" width="84" height="1" fill="#736a5e"/><rect y="13" width="84" height="1" fill="#736a5e"/><rect y="14" width="84" height="1" fill="#736a5e"/><rect y="15" width="84" height="1" fill="#756c60"/><rect y="16" width="84" height="1" fill="#746b5f"/><rect y="17" width="84" height="1" fill="#72695d"/><rect y="18" width="84" height="1" fill="#756c61"/><rect y="19" width="84" height="1" fill="#746b5f"/><rect y="20" width="84" height="1" fill="#776e62"/><rect y="21" width="84" height="1" fill="#756c60"/><rect y="22" width="84" height="1" fill="#746b5f"/><rect y="23" width="84" height="1" fill="#776e62"/><rect y="24" width="84" height="1" fill="#736a5e"/><rect y="25" width="84" height="1" fill="#72695e"/><rect y="26" width="84" height="1" fill="#756c60"/><rect y="27" width="84" height="1" fill="#756c60"/><rect y="28" width="84" height="1" fill="#736a5e"/><rect y="29" width="84" height="1" fill="#776e62"/><rect y="30" width="84" height="1" fill="#756c60"/><rect y="31" width="84" height="1" fill="#766d61"/><rect y="32" width="84" height="1" fill="#746b60"/><rect y="33" width="84" height="1" fill="#797064"/><rect y="34" width="84" height="1" fill="#797063"/><rect y="35" width="84" height="1" fill="#7d7367"/><rect y="36" width="84" height="1" fill="#7f7568"/><rect y="37" width="84" height="1" fill="#7e7467"/><rect y="38" width="84" height="1" fill="#807669"/><rect y="39" width="84" height="1" fill="#7f7568"/><rect y="40" width="84" height="1" fill="#7e7468"/><rect y="41" width="84" height="1" fill="#7c7266"/><rect y="42" width="84" height="1" fill="#7c7266"/><rect y="43" width="84" height="1" fill="#7c7366"/><rect y="44" width="84" height="1" fill="#786e62"/><rect y="45" width="84" height="1" fill="#7c7266"/><rect y="46" width="84" height="1" fill="#7a7164"/><rect y="47" width="84" height="1" fill="#7a7165"/><rect y="48" width="84" height="1" fill="#7e7467"/><rect y="49" width="84" height="1" fill="#7b7165"/><rect y="50" width="84" height="1" fill="#796f63"/><rect y="51" width="84" height="1" fill="#786f63"/><rect y="52" width="84" height="1" fill="#797064"/><rect y="53" width="84" height="1" fill="#756c60"/><rect y="54" width="84" height="1" fill="#7b7165"/><rect y="55" width="84" height="1" fill="#756c60"/><rect y="56" width="84" height="1" fill="#797064"/><rect y="57" width="84" height="1" fill="#797063"/><rect y="58" width="84" height="1" fill="#736a5f"/><rect y="59" width="84" height="1" fill="#756d61"/><rect y="60" width="84" height="1" fill="#736a5e"/><rect y="61" width="84" height="1" fill="#746b5f"/><rect y="62" width="84" height="1" fill="#72695d"/><rect y="63" width="84" height="1" fill="#736a5e"/><rect y="64" width="84" height="1" fill="#756c60"/><rect y="65" width="84" height="1" fill="#7b7265"/><rect y="66" width="84" height="1" fill="#776e62"/><rect y="67" width="84" height="1" fill="#7b7165"/><rect y="68" width="84" height="1" fill="#7b7165"/><rect y="69" width="84" height="1" fill="#797064"/><rect y="70" width="84" height="1" fill="#756c60"/><rect y="71" width="84" height="1" fill="#746b5f"/><rect y="72" width="84" height="1" fill="#756c60"/><rect y="73" width="84" height="1" fill="#756c60"/><rect y="74" width="84" height="1" fill="#72695d"/><rect y="75" width="84" height="1" fill="#746b5f"/><rect y="76" width="84" height="1" fill="#736a5e"/><rect y="77" width="84" height="1" fill="#72695d"/><rect y="78" width="84" height="1" fill="#6e6559"/><rect y="79" width="84" height="1" fill="#71685d"/><rect y="80" width="84" height="1" fill="#6e655a"/><rect y="81" width="84" height="1" fill="#70675c"/><rect y="82" width="84" height="1" fill="#736a5e"/><rect y="83" width="84" height="1" fill="#756c60"/><rect x="57.6" y="28.6" width="42.3" height="0.8" fill="#564e44" opacity="0.26"/><rect x="-7.5" y="6.6" width="49.5" height="0.6" fill="#564e44" opacity="0.50"/><rect x="24.8" y="82.9" width="35.3" height="1.3" fill="#564e44" opacity="0.23"/><rect x="15.4" y="38.3" width="17.8" height="1.0" fill="#564e44" opacity="0.47"/><rect x="-9.0" y="70.4" width="51.6" height="1.3" fill="#847a6d" opacity="0.48"/><rect x="16.5" y="9.0" width="22.5" height="1.0" fill="#564e44" opacity="0.45"/><rect x="51.6" y="83.9" width="63.8" height="1.3" fill="#564e44" opacity="0.31"/><rect x="4.4" y="40.2" width="35.2" height="1.5" fill="#564e44" opacity="0.20"/><rect x="32.7" y="80.6" width="40.0" height="0.8" fill="#564e44" opacity="0.27"/><rect x="52.9" y="65.7" width="33.1" height="1.2" fill="#847a6d" opacity="0.43"/><rect x="43.8" y="55.8" width="33.2" height="1.0" fill="#564e44" opacity="0.40"/><rect x="38.0" y="64.7" width="29.7" height="1.1" fill="#847a6d" opacity="0.48"/><rect x="25.9" y="1.0" width="27.5" height="1.3" fill="#564e44" opacity="0.39"/><rect x="47.0" y="54.4" width="32.4" height="1.3" fill="#847a6d" opacity="0.38"/><rect x="50.8" y="29.4" width="58.5" height="1.5" fill="#847a6d" opacity="0.39"/><rect x="24.5" y="43.5" width="23.3" height="1.0" fill="#847a6d" opacity="0.44"/><rect x="40.5" y="58.1" width="51.5" height="1.1" fill="#847a6d" opacity="0.21"/><rect x="15.3" y="55.9" width="46.2" height="1.2" fill="#847a6d" opacity="0.42"/><rect x="-6.6" y="2.3" width="37.1" height="1.2" fill="#564e44" opacity="0.38"/><rect x="-16.5" y="53.0" width="38.6" height="0.7" fill="#564e44" opacity="0.23"/><rect x="-4.8" y="26.7" width="24.7" height="0.9" fill="#564e44" opacity="0.16"/><rect x="29.6" y="51.4" width="26.9" height="1.0" fill="#564e44" opacity="0.47"/><rect x="14.4" y="23.4" width="20.8" height="0.6" fill="#564e44" opacity="0.44"/><rect x="-12.0" y="51.5" width="42.3" height="1.5" fill="#564e44" opacity="0.27"/><rect x="15.2" y="68.8" width="55.6" height="0.7" fill="#564e44" opacity="0.37"/><rect x="27.4" y="50.1" width="62.9" height="0.9" fill="#847a6d" opacity="0.49"/><rect x="-19.9" y="75.1" width="20.4" height="0.7" fill="#847a6d" opacity="0.35"/><rect x="54.9" y="52.9" width="33.8" height="0.9" fill="#564e44" opacity="0.30"/><rect x="11.9" y="81.7" width="63.1" height="0.8" fill="#564e44" opacity="0.47"/><rect x="21.7" y="82.4" width="35.8" height="1.0" fill="#847a6d" opacity="0.26"/><rect x="20.1" y="24.1" width="21.1" height="0.9" fill="#564e44" opacity="0.37"/><rect x="49.5" y="65.7" width="15.7" height="1.4" fill="#564e44" opacity="0.34"/><rect x="0.6" y="65.7" width="28.4" height="0.9" fill="#847a6d" opacity="0.20"/><rect x="19.9" y="51.1" width="47.2" height="0.7" fill="#847a6d" opacity="0.36"/><rect x="5.3" y="63.9" width="41.7" height="1.1" fill="#564e44" opacity="0.27"/><rect x="10.3" y="39.0" width="52.3" height="0.8" fill="#564e44" opacity="0.36"/><rect x="57.0" y="38.3" width="59.4" height="1.3" fill="#564e44" opacity="0.34"/><rect x="28.4" y="35.9" width="50.4" height="1.4" fill="#564e44" opacity="0.37"/><rect x="12.9" y="32.4" width="57.6" height="1.3" fill="#564e44" opacity="0.22"/><rect x="50.2" y="5.5" width="49.7" height="1.3" fill="#564e44" opacity="0.30"/><rect x="-8.0" y="76.5" width="38.9" height="0.9" fill="#564e44" opacity="0.34"/><rect x="29.2" y="12.9" width="55.6" height="1.3" fill="#564e44" opacity="0.17"/><rect x="35.7" y="66.5" width="16.3" height="1.5" fill="#847a6d" opacity="0.40"/><rect x="-15.9" y="58.9" width="57.1" height="1.5" fill="#847a6d" opacity="0.23"/><rect x="-8.7" y="59.8" width="29.6" height="1.1" fill="#564e44" opacity="0.47"/><rect x="-6.5" y="34.8" width="46.1" height="0.9" fill="#564e44" opacity="0.17"/><rect x="-15.2" y="6.0" width="43.8" height="0.7" fill="#847a6d" opacity="0.41"/><rect x="6.4" y="36.3" width="45.0" height="0.9" fill="#847a6d" opacity="0.32"/><rect x="38.6" y="4.7" width="22.6" height="1.4" fill="#564e44" opacity="0.37"/><rect x="32.2" y="46.6" width="28.2" height="1.3" fill="#564e44" opacity="0.34"/><rect x="-8.8" y="43.4" width="26.7" height="0.8" fill="#847a6d" opacity="0.28"/><rect x="35.0" y="59.9" width="19.3" height="0.7" fill="#564e44" opacity="0.38"/><rect x="0.0" y="49.9" width="58.8" height="1.3" fill="#564e44" opacity="0.32"/><rect x="40.9" y="2.5" width="17.7" height="1.2" fill="#847a6d" opacity="0.20"/><rect x="-10.2" y="18.7" width="63.6" height="0.7" fill="#847a6d" opacity="0.38"/><rect x="9.8" y="52.5" width="26.8" height="0.9" fill="#847a6d" opacity="0.27"/><rect x="-8.5" y="32.4" width="56.6" height="1.0" fill="#847a6d" opacity="0.38"/><rect x="23.5" y="71.5" width="44.6" height="1.0" fill="#847a6d" opacity="0.35"/><rect x="-17.2" y="8.1" width="25.1" height="1.0" fill="#847a6d" opacity="0.16"/><rect x="-20.0" y="63.9" width="38.5" height="1.0" fill="#847a6d" opacity="0.46"/><rect y="65" width="84" height="19" fill="rgba(0,0,0,0.5)"/></svg>
<div style="position:absolute;left:54px;top:583.69px;font-size:11px;line-height:11px;color:#fff;font-weight:bold;white-space:nowrap;">A435</div>
<div style="position:absolute;left:150px;top:507px;width:100px;height:100px;background:#cbcbcb"></div>
<svg style="position:absolute;left:158px;top:515px" width="84" height="84"><rect width="84" height="84" fill="#cfae8f"/><rect y="0" width="84" height="1" fill="#cea785"/><rect y="1" width="84" height="1" fill="#ceaa89"/><rect y="2" width="84" height="1" fill="#cea886"/><rect y="3" width="84" height="1" fill="#cea988"/><rect y="4" width="84" height="1" fill="#cea785"/><rect y="5" width="84" height="1" fill="#ceaa89"/><rect y="6" width="84" height="1" fill="#cea988"/><rect y="7" width="84" height="1" fill="#cfae8f"/><rect y="8" width="84" height="1" fill="#d3b191"/><rect y="9" width="84" height="1" fill="#d3b191"/><rect y="10" width="84" height="1" fill="#d6b494"/><rect y="11" width="84" height="1" fill="#d7b595"/><rect y="12" width="84" height="1" fill="#d1b091"/><rect y="13" width="84" height="1" fill="#d4b293"/><rect y="14" width="84" height="1" fill="#d7b494"/><rect y="15" width="84" height="1" fill="#d1af90"/><rect y="16" width="84" height="1" fill="#d7b594"/><rect y="17" width="84" height="1" fill="#d5b393"/><rect y="18" width="84" height="1" fill="#d6b494"/><rect y="19" width="84" height="1" fill="#cfae8f"/><rect y="20" width="84" height="1" fill="#cfac8c"/><rect y="21" width="84" height="1" fill="#d0af90"/><rect y="22" width="84" height="1" fill="#d0af90"/><rect y="23" width="84" height="1" fill="#cfad8e"/><rect y="24" width="84" height="1" fill="#cfad8d"/><rect y="25" width="84" height="1" fill="#d1b090"/><rect y="26" width="84" height="1" fill="#d9b696"/><rect y="27" width="84" height="1" fill="#d6b494"/><rect y="28" width="84" height="1" fill="#deba99"/><rect y="29" width="84" height="1" fill="#d8b695"/><rect y="30" width="84" height="1" fill="#d2b091"/><rect y="31" width="84" height="1" fill="#d6b494"/><rect y="32" width="84" height="1" fill="#d2b191"/><rect y="33" width="84" height="1" fill="#dab797"/><rect y="34" width="84" height="1" fill="#dcb998"/><rect y="35" width="84" height="1" fill="#dab797"/><rect y="36" width="84" height="1" fill="#ddba99"/><rect y="37" width="84" height="1" fill="#debb9a"/><rect y="38" width="84" height="1" fill="#dfbc9a"/><rect y="39" width="84" height="1" fill="#e0bd9b"/><rect y="40" width="84" height="1" fill="#d5b393"/><rect y="41" width="84" height="1" fill="#dab796"/><rect y="42" width="84" height="1" fill="#ddba99"/><rect y="43" width="84" height="1" fill="#dab796"/><rect y="44" width="84" height="1" fill="#dcb998"/><rect y="45" width="84" height="1" fill="#d4b292"/><rect y="46" width="84" height="1" fill="#d8b695"/><rect y="47" width="84" height="1" fill="#cfae8f"/><rect y="48" width="84" height="1" fill="#ceaa89"/><rect y="49" width="84" height="1" fill="#ceab8a"/><rect y="50" width="84" height="1" fill="#cea887"/><rect y="51" width="84" height="1" fill="#cea886"/><rect y="52" width="84" height="1" fill="#ceaa89"/><rect y="53" width="84" height="1" fill="#cea988"/><rect y="54" width="84" height="1" fill="#ceaa89"/><rect y="55" width="84" height="1" fill="#cfad8e"/><rect y="56" width="84" height="1" fill="#cfac8c"/><rect y="57" width="84" height="1" fill="#cea987"/><rect y="58" width="84" height="1" fill="#cfac8c"/><rect y="59" width="84" height="1" fill="#cea988"/><rect y="60" width="84" height="1" fill="#ceab8a"/><rect y="61" width="84" height="1" fill="#cfae8f"/><rect y="62" width="84" height="1" fill="#cfad8e"/><rect y="63" width="84" height="1" fill="#cfab8b"/><rect y="64" width="84" height="1" fill="#cfab8b"/><rect y="65" width="84" height="1" fill="#ceaa8a"/><rect y="66" width="84" height="1" fill="#cea887"/><rect y="67" width="84" height="1" fill="#cfac8d"/><rect y="68" width="84" height="1" fill="#cea887"/><rect y="69" width="84" height="1" fill="#cfab8b"/><rect y="70" width="84" height="1" fill="#cfae8f"/><rect y="71" width="84" height="1" fill="#cfad8e"/><rect y="72" width="84" height="1" fill="#d4b292"/><rect y="73" width="84" height="1" fill="#cfac8c"/><rect y="74" width="84" height="1" fill="#cfae8f"/><rect y="75" width="84" height="1" fill="#cfac8d"/><rect y="76" width="84" height="1" fill="#ceaa89"/><rect y="77" width="84" height="1" fill="#ceab8a"/><rect y="78" width="84" height="1" fill="#cea887"/><rect y="79" width="84" height="1" fill="#ceab8a"/><rect y="80" width="84" height="1" fill="#cfab8b"/><rect y="81" width="84" height="1" fill="#ceaa8a"/><rect y="82" width="84" height="1" fill="#ceaa8a"/><rect y="83" width="84" height="1" fill="#cfac8c"/><rect x="-12.8" y="34.4" width="52.3" height="1.3" fill="#c98a5c" opacity="0.24"/><rect x="-18.2" y="14.5" width="21.2" height="0.8" fill="#c98a5c" opacity="0.36"/><rect x="57.9" y="37.9" width="27.7" height="1.2" fill="#e8c3a0" opacity="0.29"/><rect x="19.9" y="22.5" width="38.9" height="0.9" fill="#c98a5c" opacity="0.20"/><rect x="7.2" y="67.6" width="48.0" height="0.9" fill="#e8c3a0" opacity="0.49"/><rect x="6.9" y="50.7" width="34.9" height="1.4" fill="#e8c3a0" opacity="0.32"/><rect x="-19.5" y="24.4" width="37.5" height="1.3" fill="#c98a5c" opacity="0.17"/><rect x="40.4" y="9.4" width="33.1" height="0.7" fill="#e8c3a0" opacity="0.48"/><rect x="59.6" y="16.2" width="45.7" height="1.3" fill="#e8c3a0" opacity="0.30"/><rect x="19.4" y="41.3" width="20.0" height="1.2" fill="#c98a5c" opacity="0.28"/><rect x="-7.9" y="51.0" width="46.4" height="1.2" fill="#c98a5c" opacity="0.18"/><rect x="55.6" y="38.9" width="46.5" height="1.3" fill="#c98a5c" opacity="0.40"/><rect x="31.9" y="7.0" width="60.6" height="1.0" fill="#e8c3a0" opacity="0.47"/><rect x="46.5" y="58.3" width="21.9" height="1.0" fill="#e8c3a0" opacity="0.48"/><rect x="17.6" y="65.4" width="28.8" height="1.3" fill="#c98a5c" opacity="0.40"/><rect x="4.0" y="82.2" width="62.0" height="0.9" fill="#e8c3a0" opacity="0.18"/><rect x="16.2" y="81.2" width="61.1" height="1.3" fill="#c98a5c" opacity="0.16"/><rect x="25.0" y="53.6" width="16.6" height="0.6" fill="#c98a5c" opacity="0.21"/><rect x="44.3" y="83.4" width="62.5" height="0.7" fill="#c98a5c" opacity="0.40"/><rect x="-10.4" y="61.4" width="42.4" height="0.7" fill="#c98a5c" opacity="0.31"/><rect x="23.7" y="6.2" width="16.5" height="0.9" fill="#c98a5c" opacity="0.33"/><rect x="27.7" y="12.7" width="34.4" height="1.1" fill="#c98a5c" opacity="0.23"/><rect x="15.2" y="76.5" width="23.2" height="1.1" fill="#c98a5c" opacity="0.26"/><rect x="27.8" y="66.1" width="24.4" height="1.0" fill="#c98a5c" opacity="0.26"/><rect x="63.8" y="33.4" width="42.6" height="1.2" fill="#e8c3a0" opacity="0.38"/><rect x="11.3" y="67.6" width="48.3" height="1.2" fill="#c98a5c" opacity="0.49"/><rect x="-14.9" y="32.3" width="17.0" height="1.2" fill="#c98a5c" opacity="0.42"/><rect x="10.9" y="8.4" width="16.6" height="0.8" fill="#e8c3a0" opacity="0.34"/><rect x="57.5" y="47.5" width="29.7" height="1.4" fill="#e8c3a0" opacity="0.31"/><rect x="35.6" y="14.2" width="21.0" height="0.6" fill="#e8c3a0" opacity="0.19"/><rect x="43.0" y="77.3" width="48.8" height="0.9" fill="#e8c3a0" opacity="0.41"/><rect x="-3.0" y="37.2" width="58.0" height="0.8" fill="#e8c3a0" opacity="0.42"/><rect x="1.4" y="49.7" width="54.5" height="1.2" fill="#e8c3a0" opacity="0.41"/><rect x="45.3" y="57.4" width="19.7" height="0.9" fill="#c98a5c" opacity="0.36"/><rect x="59.7" y="9.8" width="16.4" height="1.0" fill="#e8c3a0" opacity="0.47"/><rect x="-15.7" y="69.9" width="22.0" height="0.6" fill="#c98a5c" opacity="0.15"/><rect x="-12.6" y="69.6" width="44.5" height="1.0" fill="#c98a5c" opacity="0.25"/><rect x="62.1" y="15.3" width="34.2" height="1.2" fill="#c98a5c" opacity="0.36"/><rect x="2.7" y="40.4" width="21.8" height="1.0" fill="#c98a5c" opacity="0.46"/><rect x="28.4" y="67.9" width="62.4" height="0.7" fill="#c98a5c" opacity="0.43"/><rect x="19.8" y="49.8" width="58.1" height="1.3" fill="#e8c3a0" opacity="0.34"/><rect x="50.7" y="39.5" width="60.0" height="1.4" fill="#e8c3a0" opacity="0.20"/><rect x="8.4" y="71.8" width="27.6" height="1.4" fill="#c98a5c" opacity="0.20"/><rect x="-19.6" y="30.5" width="30.2" height="1.3" fill="#e8c3a0" opacity="0.18"/><rect x="-12.5" y="77.8" width="34.0" height="1.4" fill="#e8c3a0" opacity="0.19"/><rect x="60.1" y="43.7" width="41.0" height="0.9" fill="#c98a5c" opacity="0.42"/><rect x="50.7" y="83.5" width="44.6" height="1.3" fill="#e8c3a0" opacity="0.45"/><rect x="-9.0" y="5.6" width="20.5" height="0.7" fill="#e8c3a0" opacity="0.36"/><rect x="-10.5" y="42.4" width="49.4" height="1.5" fill="#c98a5c" opacity="0.42"/><rect x="-9.5" y="55.9" width="32.6" height="1.4" fill="#e8c3a0" opacity="0.21"/><rect x="-4.5" y="14.7" width="46.4" height="1.0" fill="#e8c3a0" opacity="0.45"/><rect x="31.6" y="9.3" width="37.8" height="1.3" fill="#c98a5c" opacity="0.43"/><rect x="32.6" y="81.6" width="60.6" height="1.4" fill="#c98a5c" opacity="0.25"/><rect x="63.5" y="2.5" width="37.8" height="1.2" fill="#c98a5c" opacity="0.17"/><rect x="32.4" y="32.3" width="20.1" height="1.3" fill="#c98a5c" opacity="0.44"/><rect x="36.1" y="12.4" width="38.5" height="1.1" fill="#c98a5c" opacity="0.29"/><rect x="-11.3" y="70.4" width="37.3" height="1.5" fill="#e8c3a0" opacity="0.15"/><rect x="20.3" y="57.0" width="18.5" height="1.3" fill="#e8c3a0" opacity="0.19"/><rect x="52.4" y="83.1" width="36.9" height="0.9" fill="#c98a5c" opacity="0.24"/><rect x="54.3" y="45.8" width="37.6" height="0.6" fill="#e8c3a0" opacity="0.49"/><rect y="65" width="84" height="19" fill="rgba(0,0,0,0.5)"/></svg>
<div style="position:absolute;left:162px;top:583.69px;font-size:11px;line-height:11px;color:#fff;font-weight:bold;white-space:nowrap;">A440</div>
<div style="position:absolute;left:257px;top:507px;width:100px;height:100px;background:#cbcbcb"></div>
<div style="position:absolute;left:265px;top:515px;width:84px;height:84px;background:#e8ecf3"></div>
<div style="position:absolute;left:265px;top:580px;width:84px;height:19px;background:rgba(0,0,0,0.5)"></div>
<div style="position:absolute;left:269px;top:583.69px;font-size:11px;line-height:11px;color:#fff;font-weight:bold;white-space:nowrap;">P100</div>
<div style="position:absolute;left:365px;top:507px;width:100px;height:100px;background:#cbcbcb"></div>
<div style="position:absolute;left:373px;top:515px;width:84px;height:84px;background:#c9c9c9"></div>
<div style="position:absolute;left:373px;top:580px;width:84px;height:19px;background:rgba(0,0,0,0.5)"></div>
<div style="position:absolute;left:377px;top:583.69px;font-size:11px;line-height:11px;color:#fff;font-weight:bold;white-space:nowrap;">P200</div>
<div style="position:absolute;left:42px;top:611px;width:100px;height:100px;background:#cbcbcb"></div>
<div style="position:absolute;left:50px;top:619px;width:84px;height:84px;background:#a6a6a6"></div>
<div style="position:absolute;left:50px;top:684px;width:84px;height:19px;background:rgba(0,0,0,0.5)"></div>
<div style="position:absolute;left:54px;top:687.69px;font-size:11px;line-height:11px;color:#fff;font-weight:bold;white-space:nowrap;">P300</div>
<div style="position:absolute;left:150px;top:611px;width:100px;height:100px;background:#0a7cff"></div>
<div style="position:absolute;left:158px;top:619px;width:84px;height:84px;background:#686868"></div>
<div style="position:absolute;left:158px;top:684px;width:84px;height:19px;background:rgba(0,0,0,0.5)"></div>
<div style="position:absolute;left:162px;top:687.69px;font-size:11px;line-height:11px;color:#fff;font-weight:bold;white-space:nowrap;">P400</div>
<div style="position:absolute;left:257px;top:611px;width:100px;height:100px;background:#cbcbcb"></div>
<div style="position:absolute;left:265px;top:619px;width:84px;height:84px;background:#171717"></div>
<div style="position:absolute;left:265px;top:684px;width:84px;height:19px;background:rgba(0,0,0,0.5)"></div>
<div style="position:absolute;left:269px;top:687.69px;font-size:11px;line-height:11px;color:#fff;font-weight:bold;white-space:nowrap;">P500</div>
<div style="position:absolute;left:365px;top:611px;width:100px;height:100px;background:#cbcbcb"></div>
<div style="position:absolute;left:373px;top:619px;width:84px;height:84px;background:#1f3a5e"></div>
<div style="position:absolute;left:373px;top:684px;width:84px;height:19px;background:rgba(0,0,0,0.5)"></div>
<div style="position:absolute;left:377px;top:687.69px;font-size:11px;line-height:11px;color:#fff;font-weight:bold;white-space:nowrap;">R302</div>
<div style="position:absolute;left:29px;top:740px;width:465px;height:300px;border:1.2px solid #d0d0d0;border-radius:8px"></div>
<div style="position:absolute;left:42px;top:757.16px;font-size:16.7px;line-height:16.7px;color:#2d2d45;font-weight:bold;white-space:nowrap;">Panel Materials</div>
<div style="position:absolute;left:42px;top:794px;width:100px;height:100px;background:#cbcbcb"></div>
<svg style="position:absolute;left:50px;top:802px" width="84" height="84"><rect width="84" height="84" fill="#877866"/><rect y="0" width="84" height="1" fill="#887967"/><rect y="1" width="84" height="1" fill="#887967"/><rect y="2" width="84" height="1" fill="#8a7b68"/><rect y="3" width="84" height="1" fill="#8c7c6a"/><rect y="4" width="84" height="1" fill="#887967"/><rect y="5" width="84" height="1" fill="#8a7a68"/><rect y="6" width="84" height="1" fill="#92826e"/><rect y="7" width="84" height="1" fill="#92816e"/><rect y="8" width="84" height="1" fill="#968571"/><rect y="9" width="84" height="1" fill="#90806d"/><rect y="10" width="84" height="1" fill="#93826f"/><rect y="11" width="84" height="1" fill="#93826f"/><rect y="12" width="84" height="1" fill="#8d7d6a"/><rect y="13" width="84" height="1" fill="#90806d"/><rect y="14" width="84" height="1" fill="#8e7e6b"/><rect y="15" width="84" height="1" fill="#877866"/><rect y="16" width="84" height="1" fill="#887967"/><rect y="17" width="84" height="1" fill="#8c7c6a"/><rect y="18" width="84" height="1" fill="#8f7f6c"/><rect y="19" width="84" height="1" fill="#8a7b68"/><rect y="20" width="84" height="1" fill="#877866"/><rect y="21" width="84" height="1" fill="#877866"/><rect y="22" width="84" height="1" fill="#857664"/><rect y="23" width="84" height="1" fill="#857664"/><rect y="24" width="84" height="1" fill="#867765"/><rect y="25" width="84" height="1" fill="#867765"/><rect y="26" width="84" height="1" fill="#857664"/><rect y="27" width="84" height="1" fill="#847664"/><rect y="28" width="84" height="1" fill="#847563"/><rect y="29" width="84" height="1" fill="#847563"/><rect y="30" width="84" height="1" fill="#827362"/><rect y="31" width="84" height="1" fill="#817261"/><rect y="32" width="84" height="1" fill="#857664"/><rect y="33" width="84" height="1" fill="#857664"/><rect y="34" width="84" height="1" fill="#867766"/><rect y="35" width="84" height="1" fill="#867765"/><rect y="36" width="84" height="1" fill="#8c7d6a"/><rect y="37" width="84" height="1" fill="#8b7c69"/><rect y="38" width="84" height="1" fill="#867765"/><rect y="39" width="84" height="1" fill="#867765"/><rect y="40" width="84" height="1" fill="#867866"/><rect y="41" width="84" height="1" fill="#867765"/><rect y="42" width="84" height="1" fill="#867765"/><rect y="43" width="84" height="1" fill="#847563"/><rect y="44" width="84" height="1" fill="#857665"/><rect y="45" width="84" height="1" fill="#847564"/><rect y="46" width="84" height="1" fill="#827362"/><rect y="47" width="84" height="1" fill="#827462"/><rect y="48" width="84" height="1" fill="#837462"/><rect y="49" width="84" height="1" fill="#827462"/><rect y="50" width="84" height="1" fill="#827361"/><rect y="51" width="84" height="1" fill="#837463"/><rect y="52" width="84" height="1" fill="#827362"/><rect y="53" width="84" height="1" fill="#847563"/><rect y="54" width="84" height="1" fill="#877866"/><rect y="55" width="84" height="1" fill="#857664"/><rect y="56" width="84" height="1" fill="#847563"/><rect y="57" width="84" height="1" fill="#857664"/><rect y="58" width="84" height="1" fill="#857665"/><rect y="59" width="84" height="1" fill="#867765"/><rect y="60" width="84" height="1" fill="#857665"/><rect y="61" width="84" height="1" fill="#877866"/><rect y="62" width="84" height="1" fill="#8a7a68"/><rect y="63" width="84" height="1" fill="#8d7e6b"/><rect y="64" width="84" height="1" fill="#8d7d6a"/><rect y="65" width="84" height="1" fill="#8c7d6a"/><rect y="66" width="84" height="1" fill="#8d7e6b"/><rect y="67" width="84" height="1" fill="#8a7b69"/><rect y="68" width="84" height="1" fill="#8b7c69"/><rect y="69" width="84" height="1" fill="#91816e"/><rect y="70" width="84" height="1" fill="#948370"/><rect y="71" width="84" height="1" fill="#91816d"/><rect y="72" width="84" height="1" fill="#8e7e6b"/><rect y="73" width="84" height="1" fill="#8a7b69"/><rect y="74" width="84" height="1" fill="#8a7b68"/><rect y="75" width="84" height="1" fill="#8b7c69"/><rect y="76" width="84" height="1" fill="#887967"/><rect y="77" width="84" height="1" fill="#877866"/><rect y="78" width="84" height="1" fill="#8a7a68"/><rect y="79" width="84" height="1" fill="#877866"/><rect y="80" width="84" height="1" fill="#8b7b69"/><rect y="81" width="84" height="1" fill="#8f7f6c"/><rect y="82" width="84" height="1" fill="#8d7d6b"/><rect y="83" width="84" height="1" fill="#8c7c6a"/><rect x="26.0" y="22.6" width="62.9" height="1.3" fill="#978672" opacity="0.15"/><rect x="42.2" y="74.4" width="55.5" height="1.0" fill="#675b4b" opacity="0.33"/><rect x="53.1" y="4.7" width="43.5" height="1.0" fill="#675b4b" opacity="0.22"/><rect x="9.1" y="30.0" width="41.9" height="1.0" fill="#978672" opacity="0.37"/><rect x="-0.7" y="2.3" width="23.9" height="1.3" fill="#978672" opacity="0.35"/><rect x="48.6" y="67.0" width="27.8" height="0.7" fill="#978672" opacity="0.44"/><rect x="-18.8" y="1.4" width="52.8" height="1.2" fill="#675b4b" opacity="0.24"/><rect x="-14.2" y="28.9" width="23.0" height="0.8" fill="#675b4b" opacity="0.33"/><rect x="18.2" y="59.8" width="31.1" height="0.9" fill="#675b4b" opacity="0.32"/><rect x="-4.2" y="35.4" width="20.4" height="0.8" fill="#675b4b" opacity="0.46"/><rect x="48.6" y="50.9" width="16.0" height="1.2" fill="#675b4b" opacity="0.16"/><rect x="39.2" y="13.5" width="48.9" height="1.5" fill="#675b4b" opacity="0.34"/><rect x="23.4" y="67.0" width="26.2" height="1.1" fill="#675b4b" opacity="0.38"/><rect x="33.0" y="27.0" width="17.9" height="1.4" fill="#978672" opacity="0.25"/><rect x="52.1" y="25.7" width="30.5" height="1.0" fill="#978672" opacity="0.48"/><rect x="-19.3" y="21.2" width="58.9" height="1.5" fill="#978672" opacity="0.16"/><rect x="-5.6" y="47.9" width="58.4" height="1.1" fill="#978672" opacity="0.49"/><rect x="9.1" y="31.7" width="25.3" height="0.8" fill="#675b4b" opacity="0.39"/><rect x="35.9" y="8.8" width="29.8" height="1.4" fill="#675b4b" opacity="0.32"/><rect x="-18.5" y="75.6" width="25.0" height="1.3" fill="#978672" opacity="0.26"/><rect x="-2.1" y="28.5" width="48.7" height="0.9" fill="#978672" opacity="0.44"/><rect x="37.7" y="74.1" width="39.2" height="1.3" fill="#675b4b" opacity="0.49"/><rect x="-5.7" y="7.1" width="60.5" height="1.1" fill="#978672" opacity="0.22"/><rect x="10.9" y="70.7" width="32.0" height="1.1" fill="#978672" opacity="0.25"/><rect x="54.5" y="80.2" width="21.8" height="0.6" fill="#675b4b" opacity="0.34"/><rect x="52.8" y="6.1" width="54.4" height="1.2" fill="#675b4b" opacity="0.44"/><rect x="11.8" y="65.7" width="43.5" height="0.8" fill="#675b4b" opacity="0.23"/><rect x="27.4" y="74.8" width="61.3" height="1.3" fill="#675b4b" opacity="0.31"/><rect x="-19.0" y="69.5" width="48.5" height="1.4" fill="#675b4b" opacity="0.18"/><rect x="0.1" y="3.4" width="64.4" height="0.8" fill="#675b4b" opacity="0.30"/><rect x="42.5" y="20.3" width="20.1" height="1.5" fill="#675b4b" opacity="0.47"/><rect x="4.7" y="76.4" width="27.7" height="1.2" fill="#675b4b" opacity="0.32"/><rect x="-19.1" y="3.3" width="64.1" height="1.0" fill="#675b4b" opacity="0.25"/><rect x="-14.7" y="26.3" width="60.7" height="0.7" fill="#978672" opacity="0.49"/><rect x="31.9" y="18.1" width="64.0" height="1.2" fill="#978672" opacity="0.34"/><rect x="25.5" y="21.8" width="30.4" height="0.9" fill="#675b4b" opacity="0.24"/><rect x="17.6" y="82.6" width="47.6" height="1.0" fill="#978672" opacity="0.38"/><rect x="7.5" y="25.8" width="30.8" height="0.9" fill="#978672" opacity="0.45"/><rect x="25.7" y="28.1" width="43.9" height="0.6" fill="#675b4b" opacity="0.36"/><rect x="-13.9" y="20.5" width="42.6" height="1.2" fill="#675b4b" opacity="0.17"/><rect x="46.5" y="24.4" width="39.7" height="1.1" fill="#675b4b" opacity="0.45"/><rect x="-13.5" y="66.8" width="62.5" height="1.5" fill="#978672" opacity="0.21"/><rect x="6.9" y="69.0" width="20.3" height="0.9" fill="#978672" opacity="0.33"/><rect x="-8.1" y="75.1" width="60.5" height="1.4" fill="#675b4b" opacity="0.16"/><rect x="56.2" y="67.5" width="57.0" height="0.8" fill="#978672" opacity="0.41"/><rect x="-6.7" y="36.3" width="50.7" height="0.7" fill="#675b4b" opacity="0.38"/><rect x="47.9" y="80.9" width="42.5" height="1.0" fill="#978672" opacity="0.34"/><rect x="8.4" y="33.2" width="27.9" height="1.0" fill="#978672" opacity="0.16"/><rect x="-14.8" y="47.9" width="32.7" height="0.8" fill="#675b4b" opacity="0.20"/><rect x="13.4" y="69.6" width="35.1" height="0.6" fill="#675b4b" opacity="0.36"/><rect x="22.1" y="44.4" width="47.4" height="1.3" fill="#978672" opacity="0.30"/><rect x="21.6" y="20.0" width="38.9" height="1.1" fill="#675b4b" opacity="0.23"/><rect x="57.1" y="76.2" width="28.8" height="0.7" fill="#675b4b" opacity="0.38"/><rect x="53.7" y="43.0" width="23.0" height="0.9" fill="#978672" opacity="0.42"/><rect x="51.3" y="58.2" width="33.6" height="1.1" fill="#978672" opacity="0.40"/><rect x="55.3" y="71.9" width="63.0" height="0.8" fill="#675b4b" opacity="0.35"/><rect x="27.8" y="18.3" width="52.9" height="1.2" fill="#978672" opacity="0.17"/><rect x="23.3" y="29.2" width="23.2" height="1.5" fill="#675b4b" opacity="0.41"/><rect x="32.8" y="67.9" width="28.4" height="0.7" fill="#978672" opacity="0.47"/><rect x="50.7" y="65.2" width="48.0" height="1.4" fill="#675b4b" opacity="0.40"/></svg>
<div style="position:absolute;left:150px;top:794px;width:100px;height:100px;background:#cbcbcb"></div>
<svg style="position:absolute;left:158px;top:802px" width="84" height="84"><rect width="84" height="84" fill="#b3aea8"/><rect y="0" width="84" height="1" fill="#b5b0aa"/><rect y="1" width="84" height="1" fill="#b8b3ac"/><rect y="2" width="84" height="1" fill="#bab5ae"/><rect y="3" width="84" height="1" fill="#b7b2ac"/><rect y="4" width="84" height="1" fill="#bab5ae"/><rect y="5" width="84" height="1" fill="#b9b4ae"/><rect y="6" width="84" height="1" fill="#b9b4ad"/><rect y="7" width="84" height="1" fill="#b5b0aa"/><rect y="8" width="84" height="1" fill="#b9b4ad"/><rect y="9" width="84" height="1" fill="#bab4ae"/><rect y="10" width="84" height="1" fill="#bdb8b2"/><rect y="11" width="84" height="1" fill="#c0bbb4"/><rect y="12" width="84" height="1" fill="#bfb9b3"/><rect y="13" width="84" height="1" fill="#bab4ae"/><rect y="14" width="84" height="1" fill="#b8b3ad"/><rect y="15" width="84" height="1" fill="#b6b1ab"/><rect y="16" width="84" height="1" fill="#b5b0aa"/><rect y="17" width="84" height="1" fill="#b6b1ab"/><rect y="18" width="84" height="1" fill="#bcb7b0"/><rect y="19" width="84" height="1" fill="#bbb6af"/><rect y="20" width="84" height="1" fill="#bab5af"/><rect y="21" width="84" height="1" fill="#bdb7b1"/><rect y="22" width="84" height="1" fill="#b6b1ab"/><rect y="23" width="84" height="1" fill="#b4afa9"/><rect y="24" width="84" height="1" fill="#b1aca6"/><rect y="25" width="84" height="1" fill="#b1aba5"/><rect y="26" width="84" height="1" fill="#b3aea8"/><rect y="27" width="84" height="1" fill="#b3aea8"/><rect y="28" width="84" height="1" fill="#b9b4ad"/><rect y="29" width="84" height="1" fill="#bfbab3"/><rect y="30" width="84" height="1" fill="#bdb7b1"/><rect y="31" width="84" height="1" fill="#b8b3ad"/><rect y="32" width="84" height="1" fill="#bfb9b3"/><rect y="33" width="84" height="1" fill="#beb9b2"/><rect y="34" width="84" height="1" fill="#beb9b2"/><rect y="35" width="84" height="1" fill="#c0bbb5"/><rect y="36" width="84" height="1" fill="#bfbab3"/><rect y="37" width="84" height="1" fill="#beb9b2"/><rect y="38" width="84" height="1" fill="#b7b2ac"/><rect y="39" width="84" height="1" fill="#b9b4ae"/><rect y="40" width="84" height="1" fill="#b5b0aa"/><rect y="41" width="84" height="1" fill="#afaaa4"/><rect y="42" width="84" height="1" fill="#b1aca5"/><rect y="43" width="84" height="1" fill="#b0aba5"/><rect y="44" width="84" height="1" fill="#b0aaa4"/><rect y="45" width="84" height="1" fill="#b0aba5"/><rect y="46" width="84" height="1" fill="#b1aca5"/><rect y="47" width="84" height="1" fill="#b2ada7"/><rect y="48" width="84" height="1" fill="#b0aba5"/><rect y="49" width="84" height="1" fill="#b0aba5"/><rect y="50" width="84" height="1" fill="#aea8a2"/><rect y="51" width="84" height="1" fill="#afaaa4"/><rect y="52" width="84" height="1" fill="#afaaa4"/><rect y="53" width="84" height="1" fill="#aea9a3"/><rect y="54" width="84" height="1" fill="#afaaa4"/><rect y="55" width="84" height="1" fill="#b1aca6"/><rect y="56" width="84" height="1" fill="#b0aba5"/><rect y="57" width="84" height="1" fill="#afaaa4"/><rect y="58" width="84" height="1" fill="#aea9a2"/><rect y="59" width="84" height="1" fill="#afa9a3"/><rect y="60" width="84" height="1" fill="#b1aca6"/><rect y="61" width="84" height="1" fill="#b0aba5"/><rect y="62" width="84" height="1" fill="#b7b2ac"/><rect y="63" width="84" height="1" fill="#b4afa9"/><rect y="64" width="84" height="1" fill="#bbb6b0"/><rect y="65" width="84" height="1" fill="#b5b0aa"/><rect y="66" width="84" height="1" fill="#bab5ae"/><rect y="67" width="84" height="1" fill="#b4afa9"/><rect y="68" width="84" height="1" fill="#b1aca6"/><rect y="69" width="84" height="1" fill="#b1aca6"/><rect y="70" width="84" height="1" fill="#b1aca6"/><rect y="71" width="84" height="1" fill="#b1aca6"/><rect y="72" width="84" height="1" fill="#b0aba5"/><rect y="73" width="84" height="1" fill="#b0aba5"/><rect y="74" width="84" height="1" fill="#b2ada7"/><rect y="75" width="84" height="1" fill="#b4afa9"/><rect y="76" width="84" height="1" fill="#b2ada7"/><rect y="77" width="84" height="1" fill="#b0aba5"/><rect y="78" width="84" height="1" fill="#b5b0aa"/><rect y="79" width="84" height="1" fill="#b7b2ac"/><rect y="80" width="84" height="1" fill="#bbb6b0"/><rect y="81" width="84" height="1" fill="#b7b2ac"/><rect y="82" width="84" height="1" fill="#beb9b2"/><rect y="83" width="84" height="1" fill="#b7b2ac"/><rect x="2.9" y="54.8" width="26.3" height="1.1" fill="#938d86" opacity="0.46"/><rect x="0.6" y="71.7" width="25.5" height="1.2" fill="#938d86" opacity="0.46"/><rect x="10.4" y="2.7" width="23.6" height="1.5" fill="#938d86" opacity="0.39"/><rect x="41.3" y="2.1" width="16.1" height="0.7" fill="#c8c3bc" opacity="0.24"/><rect x="38.1" y="15.4" width="34.3" height="0.7" fill="#c8c3bc" opacity="0.17"/><rect x="8.9" y="3.0" width="45.8" height="0.9" fill="#938d86" opacity="0.41"/><rect x="17.7" y="2.6" width="53.3" height="1.3" fill="#c8c3bc" opacity="0.41"/><rect x="39.2" y="72.4" width="38.6" height="0.9" fill="#c8c3bc" opacity="0.23"/><rect x="17.6" y="8.6" width="58.7" height="1.0" fill="#938d86" opacity="0.19"/><rect x="-7.9" y="43.2" width="63.0" height="1.0" fill="#c8c3bc" opacity="0.24"/><rect x="26.9" y="1.5" width="22.0" height="0.7" fill="#938d86" opacity="0.17"/><rect x="33.3" y="8.1" width="40.4" height="1.5" fill="#c8c3bc" opacity="0.49"/><rect x="17.4" y="19.5" width="27.5" height="1.3" fill="#c8c3bc" opacity="0.36"/><rect x="1.6" y="59.6" width="36.2" height="0.6" fill="#938d86" opacity="0.33"/><rect x="-10.7" y="34.3" width="51.2" height="0.8" fill="#938d86" opacity="0.23"/><rect x="-1.7" y="19.4" width="41.0" height="1.2" fill="#938d86" opacity="0.31"/><rect x="56.2" y="17.8" width="63.2" height="1.1" fill="#938d86" opacity="0.41"/><rect x="-15.7" y="48.8" width="35.9" height="0.7" fill="#938d86" opacity="0.33"/><rect x="10.8" y="67.4" width="41.0" height="0.9" fill="#c8c3bc" opacity="0.47"/><rect x="11.3" y="82.6" width="16.0" height="0.9" fill="#938d86" opacity="0.39"/><rect x="36.5" y="70.6" width="15.8" height="1.0" fill="#938d86" opacity="0.31"/><rect x="29.5" y="17.5" width="18.7" height="1.4" fill="#938d86" opacity="0.25"/><rect x="43.4" y="6.4" width="24.6" height="1.0" fill="#938d86" opacity="0.35"/><rect x="13.2" y="63.3" width="21.1" height="1.4" fill="#938d86" opacity="0.19"/><rect x="60.6" y="53.8" width="49.6" height="1.3" fill="#c8c3bc" opacity="0.16"/><rect x="21.8" y="60.8" width="32.9" height="0.8" fill="#c8c3bc" opacity="0.31"/><rect x="20.1" y="44.2" width="62.7" height="1.4" fill="#c8c3bc" opacity="0.43"/><rect x="-0.5" y="24.9" width="39.4" height="1.2" fill="#938d86" opacity="0.24"/><rect x="29.2" y="77.2" width="55.9" height="1.5" fill="#938d86" opacity="0.18"/><rect x="15.0" y="12.3" width="18.3" height="1.5" fill="#c8c3bc" opacity="0.18"/><rect x="-9.2" y="54.4" width="29.8" height="1.2" fill="#c8c3bc" opacity="0.23"/><rect x="24.0" y="36.9" width="20.6" height="1.3" fill="#c8c3bc" opacity="0.34"/><rect x="23.4" y="8.1" width="50.8" height="1.0" fill="#c8c3bc" opacity="0.24"/><rect x="13.9" y="59.1" width="64.8" height="0.7" fill="#938d86" opacity="0.42"/><rect x="-17.5" y="37.1" width="44.8" height="1.1" fill="#938d86" opacity="0.46"/><rect x="14.0" y="40.5" width="50.5" height="1.0" fill="#c8c3bc" opacity="0.48"/><rect x="7.8" y="80.8" width="52.3" height="1.4" fill="#c8c3bc" opacity="0.38"/><rect x="32.2" y="18.9" width="35.1" height="1.2" fill="#c8c3bc" opacity="0.38"/><rect x="19.0" y="1.0" width="50.6" height="1.3" fill="#c8c3bc" opacity="0.46"/><rect x="59.2" y="1.4" width="51.5" height="1.4" fill="#c8c3bc" opacity="0.36"/><rect x="48.5" y="8.4" width="53.4" height="1.1" fill="#c8c3bc" opacity="0.22"/><rect x="47.6" y="16.1" width="21.9" height="0.8" fill="#938d86" opacity="0.36"/><rect x="19.2" y="47.6" width="25.2" height="0.6" fill="#938d86" opacity="0.49"/><rect x="50.3" y="40.8" width="47.9" height="1.2" fill="#938d86" opacity="0.41"/><rect x="2.4" y="28.1" width="40.1" height="1.3" fill="#938d86" opacity="0.16"/><rect x="43.0" y="14.6" width="54.2" height="1.3" fill="#c8c3bc" opacity="0.29"/><rect x="-8.7" y="72.6" width="23.1" height="0.9" fill="#938d86" opacity="0.28"/><rect x="26.8" y="0.9" width="63.3" height="0.9" fill="#938d86" opacity="0.28"/><rect x="53.1" y="37.2" width="30.4" height="1.1" fill="#938d86" opacity="0.38"/><rect x="-13.6" y="76.8" width="56.2" height="1.3" fill="#c8c3bc" opacity="0.26"/><rect x="13.0" y="54.9" width="57.0" height="1.0" fill="#c8c3bc" opacity="0.18"/><rect x="51.5" y="44.6" width="54.9" height="0.8" fill="#938d86" opacity="0.37"/><rect x="-0.5" y="38.4" width="28.9" height="1.3" fill="#938d86" opacity="0.49"/><rect x="10.6" y="31.9" width="30.9" height="0.7" fill="#938d86" opacity="0.18"/><rect x="4.5" y="37.1" width="59.7" height="1.2" fill="#938d86" opacity="0.47"/><rect x="7.4" y="78.1" width="20.0" height="1.2" fill="#938d86" opacity="0.23"/><rect x="9.9" y="31.4" width="54.8" height="1.2" fill="#c8c3bc" opacity="0.23"/><rect x="49.2" y="33.6" width="32.1" height="1.1" fill="#c8c3bc" opacity="0.46"/><rect x="59.7" y="58.0" width="52.1" height="1.4" fill="#c8c3bc" opacity="0.41"/><rect x="62.2" y="63.3" width="29.6" height="0.9" fill="#c8c3bc" opacity="0.37"/></svg>
<div style="position:absolute;left:257px;top:794px;width:100px;height:100px;background:#cbcbcb"></div>
<svg style="position:absolute;left:265px;top:802px" width="84" height="84"><rect width="84" height="84" fill="#8f7053"/><rect y="0" width="84" height="1" fill="#967657"/><rect y="1" width="84" height="1" fill="#8f7053"/><rect y="2" width="84" height="1" fill="#8e6f52"/><rect y="3" width="84" height="1" fill="#937355"/><rect y="4" width="84" height="1" fill="#8f7053"/><rect y="5" width="84" height="1" fill="#8f7053"/><rect y="6" width="84" height="1" fill="#947456"/><rect y="7" width="84" height="1" fill="#907053"/><rect y="8" width="84" height="1" fill="#927255"/><rect y="9" width="84" height="1" fill="#8f7053"/><rect y="10" width="84" height="1" fill="#917154"/><rect y="11" width="84" height="1" fill="#8f7053"/><rect y="12" width="84" height="1" fill="#947456"/><rect y="13" width="84" height="1" fill="#987758"/><rect y="14" width="84" height="1" fill="#977658"/><rect y="15" width="84" height="1" fill="#997859"/><rect y="16" width="84" height="1" fill="#977658"/><rect y="17" width="84" height="1" fill="#907154"/><rect y="18" width="84" height="1" fill="#937355"/><rect y="19" width="84" height="1" fill="#907053"/><rect y="20" width="84" height="1" fill="#8d6e52"/><rect y="21" width="84" height="1" fill="#8c6d51"/><rect y="22" width="84" height="1" fill="#917254"/><rect y="23" width="84" height="1" fill="#8f7053"/><rect y="24" width="84" height="1" fill="#907154"/><rect y="25" width="84" height="1" fill="#917154"/><rect y="26" width="84" height="1" fill="#8e6f52"/><rect y="27" width="84" height="1" fill="#8e6f52"/><rect y="28" width="84" height="1" fill="#8b6c50"/><rect y="29" width="84" height="1" fill="#8c6d51"/><rect y="30" width="84" height="1" fill="#8a6c4f"/><rect y="31" width="84" height="1" fill="#8d6e51"/><rect y="32" width="84" height="1" fill="#8c6d51"/><rect y="33" width="84" height="1" fill="#88694d"/><rect y="34" width="84" height="1" fill="#87694d"/><rect y="35" width="84" height="1" fill="#86684c"/><rect y="36" width="84" height="1" fill="#896b4e"/><rect y="37" width="84" height="1" fill="#86684c"/><rect y="38" width="84" height="1" fill="#886a4e"/><rect y="39" width="84" height="1" fill="#886a4e"/><rect y="40" width="84" height="1" fill="#8c6d50"/><rect y="41" width="84" height="1" fill="#8d6e51"/><rect y="42" width="84" height="1" fill="#8e6f52"/><rect y="43" width="84" height="1" fill="#917154"/><rect y="44" width="84" height="1" fill="#917154"/><rect y="45" width="84" height="1" fill="#937355"/><rect y="46" width="84" height="1" fill="#907154"/><rect y="47" width="84" height="1" fill="#927255"/><rect y="48" width="84" height="1" fill="#927255"/><rect y="49" width="84" height="1" fill="#937356"/><rect y="50" width="84" height="1" fill="#917254"/><rect y="51" width="84" height="1" fill="#8d6f52"/><rect y="52" width="84" height="1" fill="#917254"/><rect y="53" width="84" height="1" fill="#907154"/><rect y="54" width="84" height="1" fill="#8f7053"/><rect y="55" width="84" height="1" fill="#8e6f52"/><rect y="56" width="84" height="1" fill="#8f7053"/><rect y="57" width="84" height="1" fill="#8e6f52"/><rect y="58" width="84" height="1" fill="#947456"/><rect y="59" width="84" height="1" fill="#937356"/><rect y="60" width="84" height="1" fill="#927254"/><rect y="61" width="84" height="1" fill="#8f7053"/><rect y="62" width="84" height="1" fill="#947456"/><rect y="63" width="84" height="1" fill="#947456"/><rect y="64" width="84" height="1" fill="#8d6e51"/><rect y="65" width="84" height="1" fill="#927255"/><rect y="66" width="84" height="1" fill="#907154"/><rect y="67" width="84" height="1" fill="#917154"/><rect y="68" width="84" height="1" fill="#947456"/><rect y="69" width="84" height="1" fill="#997859"/><rect y="70" width="84" height="1" fill="#9b795a"/><rect y="71" width="84" height="1" fill="#957556"/><rect y="72" width="84" height="1" fill="#997859"/><rect y="73" width="84" height="1" fill="#967557"/><rect y="74" width="84" height="1" fill="#9c7a5a"/><rect y="75" width="84" height="1" fill="#997859"/><rect y="76" width="84" height="1" fill="#9e7c5c"/><rect y="77" width="84" height="1" fill="#9e7c5c"/><rect y="78" width="84" height="1" fill="#997859"/><rect y="79" width="84" height="1" fill="#9a7859"/><rect y="80" width="84" height="1" fill="#917154"/><rect y="81" width="84" height="1" fill="#8d6e51"/><rect y="82" width="84" height="1" fill="#8e6f52"/><rect y="83" width="84" height="1" fill="#8b6c50"/><rect x="14.3" y="16.6" width="45.5" height="1.4" fill="#6a4f36" opacity="0.20"/><rect x="60.5" y="26.4" width="59.8" height="1.1" fill="#6a4f36" opacity="0.28"/><rect x="30.0" y="54.1" width="43.0" height="1.1" fill="#a07d5d" opacity="0.37"/><rect x="40.5" y="36.2" width="26.9" height="1.1" fill="#a07d5d" opacity="0.26"/><rect x="-19.0" y="46.1" width="35.8" height="1.2" fill="#6a4f36" opacity="0.35"/><rect x="-15.0" y="53.1" width="46.4" height="0.9" fill="#a07d5d" opacity="0.31"/><rect x="42.0" y="59.4" width="16.1" height="1.5" fill="#a07d5d" opacity="0.17"/><rect x="18.3" y="21.1" width="44.6" height="0.9" fill="#6a4f36" opacity="0.26"/><rect x="30.0" y="31.0" width="30.0" height="0.6" fill="#a07d5d" opacity="0.28"/><rect x="41.8" y="47.8" width="30.5" height="0.8" fill="#a07d5d" opacity="0.23"/><rect x="16.6" y="15.7" width="49.9" height="0.9" fill="#6a4f36" opacity="0.19"/><rect x="16.8" y="70.0" width="57.8" height="1.2" fill="#6a4f36" opacity="0.21"/><rect x="17.9" y="74.3" width="26.3" height="0.8" fill="#6a4f36" opacity="0.19"/><rect x="50.4" y="67.8" width="24.2" height="1.2" fill="#a07d5d" opacity="0.25"/><rect x="9.0" y="67.7" width="21.5" height="0.8" fill="#a07d5d" opacity="0.25"/><rect x="15.0" y="29.1" width="36.0" height="0.7" fill="#a07d5d" opacity="0.29"/><rect x="59.2" y="0.4" width="59.0" height="1.5" fill="#6a4f36" opacity="0.50"/><rect x="-1.3" y="77.9" width="52.3" height="1.1" fill="#a07d5d" opacity="0.44"/><rect x="8.6" y="24.3" width="26.4" height="0.9" fill="#6a4f36" opacity="0.17"/><rect x="-16.2" y="68.1" width="60.2" height="1.4" fill="#a07d5d" opacity="0.39"/><rect x="28.5" y="75.6" width="15.7" height="0.9" fill="#6a4f36" opacity="0.41"/><rect x="24.1" y="55.7" width="35.7" height="0.9" fill="#a07d5d" opacity="0.48"/><rect x="52.4" y="21.2" width="38.9" height="0.8" fill="#6a4f36" opacity="0.42"/><rect x="48.6" y="44.9" width="23.6" height="1.3" fill="#a07d5d" opacity="0.43"/><rect x="-19.4" y="69.2" width="46.4" height="0.8" fill="#6a4f36" opacity="0.45"/><rect x="24.3" y="22.6" width="36.1" height="0.6" fill="#a07d5d" opacity="0.32"/><rect x="-9.3" y="4.6" width="21.2" height="1.4" fill="#a07d5d" opacity="0.17"/><rect x="22.2" y="7.2" width="30.8" height="1.2" fill="#6a4f36" opacity="0.26"/><rect x="10.3" y="49.3" width="24.6" height="1.1" fill="#6a4f36" opacity="0.27"/><rect x="11.9" y="60.1" width="19.0" height="1.1" fill="#6a4f36" opacity="0.21"/><rect x="11.9" y="65.7" width="55.1" height="0.9" fill="#6a4f36" opacity="0.37"/><rect x="39.0" y="41.7" width="36.0" height="0.8" fill="#6a4f36" opacity="0.39"/><rect x="38.4" y="45.0" width="18.6" height="1.4" fill="#6a4f36" opacity="0.30"/><rect x="11.4" y="78.7" width="59.9" height="1.0" fill="#6a4f36" opacity="0.43"/><rect x="48.3" y="10.3" width="48.1" height="1.2" fill="#a07d5d" opacity="0.46"/><rect x="27.4" y="61.6" width="20.2" height="0.7" fill="#6a4f36" opacity="0.36"/><rect x="-16.3" y="65.0" width="19.6" height="0.8" fill="#a07d5d" opacity="0.18"/><rect x="50.7" y="2.0" width="21.1" height="1.4" fill="#a07d5d" opacity="0.45"/><rect x="28.6" y="80.0" width="54.9" height="1.1" fill="#a07d5d" opacity="0.16"/><rect x="-11.0" y="60.1" width="52.4" height="0.9" fill="#6a4f36" opacity="0.48"/><rect x="49.6" y="47.4" width="27.1" height="1.2" fill="#6a4f36" opacity="0.21"/><rect x="13.1" y="63.3" width="33.4" height="1.0" fill="#6a4f36" opacity="0.29"/><rect x="22.0" y="7.0" width="63.7" height="0.7" fill="#a07d5d" opacity="0.29"/><rect x="43.5" y="58.0" width="48.7" height="1.2" fill="#6a4f36" opacity="0.33"/><rect x="-7.5" y="75.4" width="19.8" height="1.1" fill="#a07d5d" opacity="0.41"/><rect x="40.4" y="37.2" width="24.3" height="1.1" fill="#6a4f36" opacity="0.24"/><rect x="-0.5" y="26.4" width="49.6" height="1.2" fill="#6a4f36" opacity="0.48"/><rect x="51.7" y="34.7" width="44.2" height="0.6" fill="#6a4f36" opacity="0.24"/><rect x="12.2" y="40.3" width="23.6" height="1.3" fill="#6a4f36" opacity="0.28"/><rect x="63.3" y="12.1" width="39.0" height="1.4" fill="#6a4f36" opacity="0.36"/><rect x="26.8" y="69.0" width="39.1" height="1.0" fill="#a07d5d" opacity="0.40"/><rect x="60.7" y="61.6" width="38.4" height="1.2" fill="#6a4f36" opacity="0.23"/><rect x="60.5" y="56.7" width="57.7" height="0.8" fill="#6a4f36" opacity="0.23"/><rect x="39.2" y="15.7" width="57.9" height="1.4" fill="#6a4f36" opacity="0.46"/><rect x="15.6" y="26.3" width="51.4" height="1.4" fill="#6a4f36" opacity="0.18"/><rect x="10.0" y="24.5" width="44.0" height="0.9" fill="#6a4f36" opacity="0.39"/><rect x="20.8" y="36.6" width="25.5" height="1.0" fill="#a07d5d" opacity="0.35"/><rect x="-10.0" y="45.7" width="28.7" height="1.4" fill="#6a4f36" opacity="0.38"/><rect x="-11.9" y="76.3" width="62.1" height="1.3" fill="#a07d5d" opacity="0.28"/><rect x="36.8" y="24.8" width="47.7" height="1.3" fill="#6a4f36" opacity="0.43"/></svg>
<div style="position:absolute;left:365px;top:794px;width:100px;height:100px;background:#cbcbcb"></div>
<svg style="position:absolute;left:373px;top:802px" width="84" height="84"><rect width="84" height="84" fill="#4f3424"/><rect y="0" width="84" height="1" fill="#543726"/><rect y="1" width="84" height="1" fill="#553827"/><rect y="2" width="84" height="1" fill="#573928"/><rect y="3" width="84" height="1" fill="#553827"/><rect y="4" width="84" height="1" fill="#543726"/><rect y="5" width="84" height="1" fill="#513525"/><rect y="6" width="84" height="1" fill="#523625"/><rect y="7" width="84" height="1" fill="#513525"/><rect y="8" width="84" height="1" fill="#513625"/><rect y="9" width="84" height="1" fill="#523625"/><rect y="10" width="84" height="1" fill="#523625"/><rect y="11" width="84" height="1" fill="#553827"/><rect y="12" width="84" height="1" fill="#533726"/><rect y="13" width="84" height="1" fill="#523625"/><rect y="14" width="84" height="1" fill="#513525"/><rect y="15" width="84" height="1" fill="#4e3323"/><rect y="16" width="84" height="1" fill="#4e3323"/><rect y="17" width="84" height="1" fill="#4e3424"/><rect y="18" width="84" height="1" fill="#4f3424"/><rect y="19" width="84" height="1" fill="#4f3424"/><rect y="20" width="84" height="1" fill="#4e3323"/><rect y="21" width="84" height="1" fill="#4b3122"/><rect y="22" width="84" height="1" fill="#4d3222"/><rect y="23" width="84" height="1" fill="#4d3223"/><rect y="24" width="84" height="1" fill="#4d3223"/><rect y="25" width="84" height="1" fill="#4d3223"/><rect y="26" width="84" height="1" fill="#4f3424"/><rect y="27" width="84" height="1" fill="#4e3424"/><rect y="28" width="84" height="1" fill="#523625"/><rect y="29" width="84" height="1" fill="#523625"/><rect y="30" width="84" height="1" fill="#4f3424"/><rect y="31" width="84" height="1" fill="#4e3323"/><rect y="32" width="84" height="1" fill="#4f3424"/><rect y="33" width="84" height="1" fill="#4d3323"/><rect y="34" width="84" height="1" fill="#4e3323"/><rect y="35" width="84" height="1" fill="#4e3323"/><rect y="36" width="84" height="1" fill="#4d3323"/><rect y="37" width="84" height="1" fill="#4d3222"/><rect y="38" width="84" height="1" fill="#4d3223"/><rect y="39" width="84" height="1" fill="#4c3222"/><rect y="40" width="84" height="1" fill="#4b3121"/><rect y="41" width="84" height="1" fill="#4b3122"/><rect y="42" width="84" height="1" fill="#4d3223"/><rect y="43" width="84" height="1" fill="#4b3122"/><rect y="44" width="84" height="1" fill="#4c3222"/><rect y="45" width="84" height="1" fill="#4e3323"/><rect y="46" width="84" height="1" fill="#4d3223"/><rect y="47" width="84" height="1" fill="#4d3323"/><rect y="48" width="84" height="1" fill="#4d3222"/><rect y="49" width="84" height="1" fill="#4c3222"/><rect y="50" width="84" height="1" fill="#4e3323"/><rect y="51" width="84" height="1" fill="#4c3222"/><rect y="52" width="84" height="1" fill="#4d3323"/><rect y="53" width="84" height="1" fill="#4e3323"/><rect y="54" width="84" height="1" fill="#513525"/><rect y="55" width="84" height="1" fill="#513525"/><rect y="56" width="84" height="1" fill="#523625"/><rect y="57" width="84" height="1" fill="#543726"/><rect y="58" width="84" height="1" fill="#523626"/><rect y="59" width="84" height="1" fill="#533726"/><rect y="60" width="84" height="1" fill="#553827"/><rect y="61" width="84" height="1" fill="#523625"/><rect y="62" width="84" height="1" fill="#523625"/><rect y="63" width="84" height="1" fill="#533626"/><rect y="64" width="84" height="1" fill="#543726"/><rect y="65" width="84" height="1" fill="#523626"/><rect y="66" width="84" height="1" fill="#4f3424"/><rect y="67" width="84" height="1" fill="#4f3424"/><rect y="68" width="84" height="1" fill="#4e3323"/><rect y="69" width="84" height="1" fill="#4f3424"/><rect y="70" width="84" height="1" fill="#4e3424"/><rect y="71" width="84" height="1" fill="#523625"/><rect y="72" width="84" height="1" fill="#543726"/><rect y="73" width="84" height="1" fill="#553827"/><rect y="74" width="84" height="1" fill="#533726"/><rect y="75" width="84" height="1" fill="#543726"/><rect y="76" width="84" height="1" fill="#4f3424"/><rect y="77" width="84" height="1" fill="#503424"/><rect y="78" width="84" height="1" fill="#533626"/><rect y="79" width="84" height="1" fill="#523625"/><rect y="80" width="84" height="1" fill="#513525"/><rect y="81" width="84" height="1" fill="#543726"/><rect y="82" width="84" height="1" fill="#523626"/><rect y="83" width="84" height="1" fill="#533726"/><rect x="-3.9" y="24.6" width="37.2" height="1.5" fill="#3a2416" opacity="0.20"/><rect x="-19.2" y="27.8" width="17.2" height="0.9" fill="#583a28" opacity="0.21"/><rect x="-11.8" y="24.4" width="64.1" height="0.7" fill="#3a2416" opacity="0.30"/><rect x="-5.8" y="4.6" width="48.8" height="1.0" fill="#3a2416" opacity="0.20"/><rect x="63.8" y="20.9" width="21.1" height="1.0" fill="#583a28" opacity="0.34"/><rect x="20.1" y="83.0" width="27.1" height="1.0" fill="#3a2416" opacity="0.29"/><rect x="54.7" y="20.9" width="56.6" height="0.8" fill="#3a2416" opacity="0.32"/><rect x="-2.5" y="20.4" width="26.6" height="0.6" fill="#3a2416" opacity="0.45"/><rect x="27.5" y="78.0" width="64.5" height="1.2" fill="#583a28" opacity="0.29"/><rect x="42.6" y="66.4" width="39.7" height="1.4" fill="#3a2416" opacity="0.18"/><rect x="57.7" y="75.6" width="31.8" height="1.2" fill="#583a28" opacity="0.38"/><rect x="24.4" y="68.4" width="47.7" height="1.4" fill="#3a2416" opacity="0.39"/><rect x="-13.8" y="80.3" width="63.6" height="0.6" fill="#583a28" opacity="0.49"/><rect x="-9.3" y="75.5" width="63.4" height="0.8" fill="#3a2416" opacity="0.38"/><rect x="27.8" y="53.4" width="52.3" height="0.6" fill="#3a2416" opacity="0.47"/><rect x="-18.9" y="77.5" width="58.8" height="1.3" fill="#583a28" opacity="0.19"/><rect x="26.3" y="73.7" width="58.9" height="0.9" fill="#583a28" opacity="0.22"/><rect x="45.0" y="74.9" width="38.6" height="0.6" fill="#3a2416" opacity="0.33"/><rect x="21.1" y="49.9" width="58.2" height="0.9" fill="#3a2416" opacity="0.36"/><rect x="23.9" y="64.5" width="15.5" height="0.7" fill="#583a28" opacity="0.44"/><rect x="12.0" y="45.6" width="54.4" height="1.0" fill="#3a2416" opacity="0.26"/><rect x="-12.0" y="81.2" width="20.7" height="1.1" fill="#583a28" opacity="0.37"/><rect x="52.1" y="36.5" width="53.8" height="0.8" fill="#583a28" opacity="0.17"/><rect x="50.3" y="25.4" width="36.1" height="1.4" fill="#3a2416" opacity="0.43"/><rect x="-7.5" y="14.8" width="39.7" height="1.4" fill="#3a2416" opacity="0.27"/><rect x="-19.5" y="59.7" width="30.6" height="1.2" fill="#3a2416" opacity="0.34"/><rect x="-13.6" y="40.7" width="27.3" height="1.3" fill="#3a2416" opacity="0.45"/><rect x="32.6" y="82.8" width="48.8" height="1.4" fill="#3a2416" opacity="0.36"/><rect x="56.6" y="39.2" width="30.3" height="1.2" fill="#583a28" opacity="0.45"/><rect x="-8.2" y="37.1" width="53.6" height="0.7" fill="#583a28" opacity="0.28"/><rect x="-7.9" y="6.9" width="55.5" height="0.9" fill="#583a28" opacity="0.21"/><rect x="9.4" y="48.4" width="46.0" height="1.4" fill="#3a2416" opacity="0.18"/><rect x="35.0" y="15.1" width="31.3" height="0.6" fill="#3a2416" opacity="0.26"/><rect x="49.7" y="79.7" width="55.1" height="0.7" fill="#583a28" opacity="0.43"/><rect x="21.6" y="49.1" width="43.7" height="1.5" fill="#583a28" opacity="0.48"/><rect x="34.7" y="9.8" width="48.8" height="1.3" fill="#583a28" opacity="0.41"/><rect x="57.9" y="25.4" width="35.3" height="1.2" fill="#583a28" opacity="0.36"/><rect x="-0.6" y="26.0" width="31.3" height="1.4" fill="#583a28" opacity="0.37"/><rect x="13.7" y="33.6" width="55.9" height="0.6" fill="#3a2416" opacity="0.25"/><rect x="25.4" y="15.4" width="49.7" height="1.5" fill="#3a2416" opacity="0.37"/><rect x="-6.9" y="52.4" width="18.4" height="1.4" fill="#583a28" opacity="0.49"/><rect x="6.2" y="50.7" width="19.6" height="1.4" fill="#3a2416" opacity="0.24"/><rect x="45.3" y="75.0" width="22.4" height="1.5" fill="#3a2416" opacity="0.23"/><rect x="46.4" y="13.7" width="49.0" height="0.8" fill="#583a28" opacity="0.34"/><rect x="-6.8" y="44.0" width="19.8" height="0.7" fill="#3a2416" opacity="0.16"/><rect x="63.4" y="5.1" width="29.5" height="1.3" fill="#583a28" opacity="0.46"/><rect x="60.0" y="55.0" width="58.9" height="1.2" fill="#3a2416" opacity="0.40"/><rect x="26.4" y="60.8" width="40.1" height="1.0" fill="#583a28" opacity="0.20"/><rect x="-5.9" y="5.7" width="58.7" height="1.2" fill="#3a2416" opacity="0.24"/><rect x="7.6" y="72.4" width="34.3" height="1.4" fill="#3a2416" opacity="0.30"/><rect x="60.6" y="1.6" width="22.6" height="1.3" fill="#583a28" opacity="0.20"/><rect x="26.5" y="19.5" width="38.8" height="1.3" fill="#3a2416" opacity="0.40"/><rect x="39.3" y="83.7" width="61.1" height="1.4" fill="#3a2416" opacity="0.48"/><rect x="29.3" y="70.0" width="20.4" height="0.9" fill="#583a28" opacity="0.37"/><rect x="55.4" y="54.3" width="45.0" height="0.8" fill="#583a28" opacity="0.16"/><rect x="35.6" y="72.1" width="30.4" height="0.9" fill="#583a28" opacity="0.46"/><rect x="54.9" y="70.1" width="59.7" height="1.2" fill="#583a28" opacity="0.46"/><rect x="24.3" y="50.8" width="64.4" height="1.2" fill="#3a2416" opacity="0.27"/><rect x="25.8" y="41.8" width="44.9" height="0.7" fill="#3a2416" opacity="0.24"/><rect x="56.3" y="65.7" width="49.8" height="1.3" fill="#583a28" opacity="0.19"/></svg>
<div style="position:absolute;left:0px;top:834px;width:524px;height:70px;background:#fff;border-top:1px solid #d8d8d8"></div>
<div style="position:absolute;left:344px;top:851px;width:80px;height:32px;background:#8a8a96;border-radius:2px"></div>
<div style="position:absolute;left:361.4000000000001px;top:859.95px;font-size:14px;line-height:14px;color:#fff;font-weight:bold;white-space:nowrap;">Cancel</div>
<div style="position:absolute;left:434px;top:851px;width:73px;height:32px;background:#015fa1;border-radius:2px"></div>
<div style="position:absolute;left:451.5px;top:859.95px;font-size:14px;line-height:14px;color:#fff;font-weight:bold;white-space:nowrap;">Apply</div>
</div>
</body></html>
